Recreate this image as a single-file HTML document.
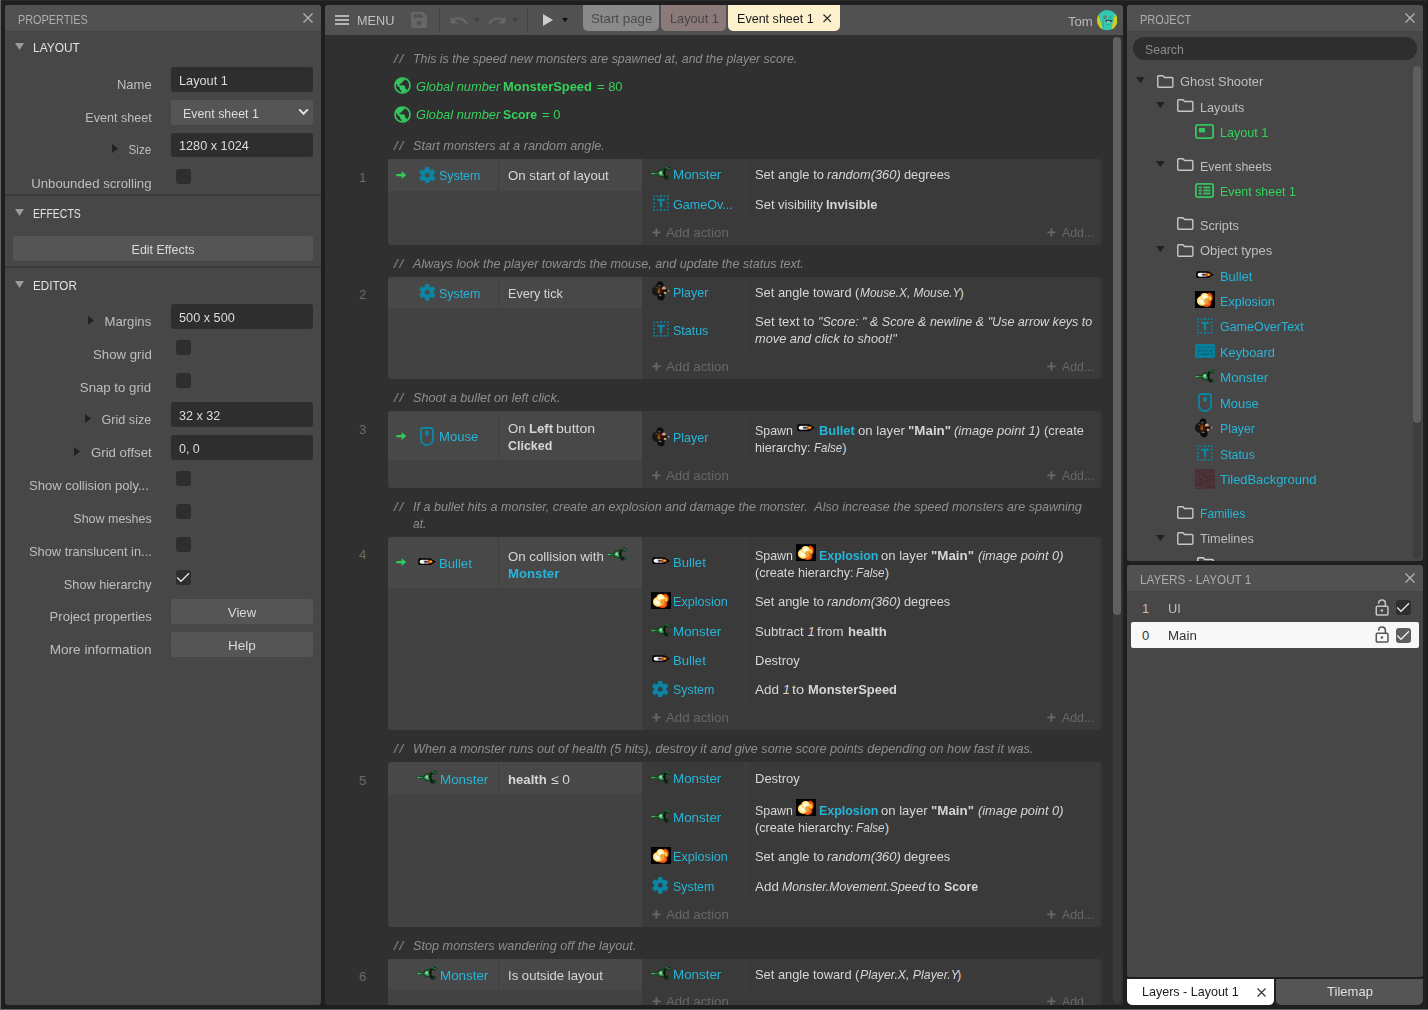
<!DOCTYPE html>
<html lang="en"><head><meta charset="utf-8"><title>Construct 3 - Ghost Shooter</title>
<style>
*{box-sizing:border-box;margin:0;padding:0}
html,body{width:1428px;height:1010px;overflow:hidden;background:#1f1f1f}
body{position:relative;font-family:"Liberation Sans",sans-serif;font-size:13px;color:#c8c8c8}
div,svg{position:absolute}
.t{line-height:17px;height:17px;white-space:nowrap}
.cap{color:#adadad}
.sec{color:#e2e2e2}
.lbl{color:#bebebe}
.val{color:#dcdcdc}
.btn{color:#d8d8d8}
.cm{color:#8e8e8e;font-style:italic}
.gv{color:#35d15b}
.gv i{font-style:italic}
.ob{color:#25b5d9}
.ac{color:#d6d6d6}
.ac b,.gv b{font-weight:bold}
.ac b.ob{color:#25b5d9}
.num{color:#6a6a6a}
.add{color:#676767}
.tr{color:#bebebe}
.gr{color:#35d15b}

</style></head>
<body>
<div style="left:0px;top:0px;width:1428px;height:1px;background:#2a2a2a;"></div>
<div style="left:0px;top:0px;width:1px;height:1010px;background:#626262;"></div>
<div style="left:1427px;top:0px;width:1px;height:1009px;background:#1a1a1a;"></div>
<div style="left:0px;top:1009px;width:1428px;height:1px;background:#666666;"></div>
<!-- Properties panel -->
<div style="left:5px;top:5px;width:316px;height:1000px;background:#474747;border-radius:3px;"></div>
<div style="left:5px;top:5px;width:316px;height:26px;background:#515151;border-radius:3px 3px 0 0;"></div>
<div style="left:5px;top:31px;width:316px;height:1px;background:#444444;"></div>
<div class="t cap" id="t1" style="top:11px;left:18px;transform:scaleX(0.8353);transform-origin:left center;">PROPERTIES</div>
<svg style="left:303px;top:13px;" width="10" height="10" viewBox="0 0 10 10"><path d="M0.5 0.5L9.5 9.5M9.5 0.5L0.5 9.5" stroke="#b4b4b4" stroke-width="1.25" fill="none"/></svg>
<svg style="left:15px;top:43px;" width="9" height="7" viewBox="0 0 9 7"><path d="M0 0H9L4.5 7Z" fill="#9c9c9c"/></svg>
<div class="t sec" id="t2" style="top:39px;left:33px;transform:scaleX(0.9165);transform-origin:left center;">LAYOUT</div>
<div class="t lbl" id="t3" style="top:76px;right:1276.5px;transform:scaleX(1.0032);transform-origin:right center;">Name</div>
<div style="left:171px;top:67px;width:142px;height:25px;background:#2e2e2e;border-radius:3px;"></div>
<div class="t val" id="t4" style="top:72px;left:179px;transform:scaleX(0.9784);transform-origin:left center;">Layout 1</div>
<div class="t lbl" id="t5" style="top:109px;right:1276.5px;transform:scaleX(0.9657);transform-origin:right center;">Event sheet</div>
<div style="left:171px;top:100px;width:142px;height:25px;background:#555555;border-radius:3px;"></div>
<div class="t val" id="t6" style="top:105px;left:183px;transform:scaleX(0.9535);transform-origin:left center;">Event sheet 1</div>
<svg style="left:298px;top:108px;" width="11" height="8" viewBox="0 0 11 8"><path d="M1.2 1.4L5.5 5.8L9.8 1.4" fill="none" stroke="#e0e0e0" stroke-width="2"/></svg>
<div class="t lbl" id="t7" style="top:141px;right:1276.5px;transform:scaleX(0.9013);transform-origin:right center;">Size</div>
<svg style="left:112px;top:144px;" width="6" height="9" viewBox="0 0 6 9"><path d="M0 0L6 4.5L0 9Z" fill="#222222"/></svg>
<div style="left:171px;top:133px;width:142px;height:24px;background:#2e2e2e;border-radius:3px;"></div>
<div class="t val" id="t8" style="top:137px;left:179px;transform:scaleX(0.9752);transform-origin:left center;">1280 x 1024</div>
<div class="t lbl" id="t9" style="top:175px;right:1276.5px;transform:scaleX(1.0149);transform-origin:right center;">Unbounded scrolling</div>
<div style="left:176px;top:169px;width:15px;height:15px;background:#2e2e2e;border-radius:3px;"></div>
<div style="left:5px;top:194px;width:316px;height:2px;background:#3b3b3b;"></div>
<svg style="left:15px;top:209px;" width="9" height="7" viewBox="0 0 9 7"><path d="M0 0H9L4.5 7Z" fill="#9c9c9c"/></svg>
<div class="t sec" id="t10" style="top:205px;left:33px;transform:scaleX(0.8070);transform-origin:left center;">EFFECTS</div>
<div style="left:13px;top:236px;width:300px;height:25px;background:#555555;border-radius:3px;"></div>
<div class="t btn" style="top:241px;left:-37.0px;width:400px;text-align:center;transform:scaleX(0.9585);transform-origin:center center;"><span id="t11">Edit Effects</span></div>
<div style="left:5px;top:266px;width:316px;height:2px;background:#3b3b3b;"></div>
<svg style="left:15px;top:281px;" width="9" height="7" viewBox="0 0 9 7"><path d="M0 0H9L4.5 7Z" fill="#9c9c9c"/></svg>
<div class="t sec" id="t12" style="top:277px;left:33px;transform:scaleX(0.8959);transform-origin:left center;">EDITOR</div>
<div class="t lbl" id="t13" style="top:313px;right:1276.5px;transform:scaleX(1.0119);transform-origin:right center;">Margins</div>
<svg style="left:88px;top:316px;" width="6" height="9" viewBox="0 0 6 9"><path d="M0 0L6 4.5L0 9Z" fill="#222222"/></svg>
<div style="left:171px;top:304px;width:142px;height:25px;background:#2e2e2e;border-radius:3px;"></div>
<div class="t val" id="t14" style="top:309px;left:179px;transform:scaleX(0.9771);transform-origin:left center;">500 x 500</div>
<div class="t lbl" id="t15" style="top:346px;right:1276.5px;transform:scaleX(1.0171);transform-origin:right center;">Show grid</div>
<div style="left:176px;top:340px;width:15px;height:15px;background:#2e2e2e;border-radius:3px;"></div>
<div class="t lbl" id="t16" style="top:379px;right:1276.5px;transform:scaleX(1.0170);transform-origin:right center;">Snap to grid</div>
<div style="left:176px;top:373px;width:15px;height:15px;background:#2e2e2e;border-radius:3px;"></div>
<div class="t lbl" id="t17" style="top:411px;right:1276.5px;transform:scaleX(0.9708);transform-origin:right center;">Grid size</div>
<svg style="left:85px;top:414px;" width="6" height="9" viewBox="0 0 6 9"><path d="M0 0L6 4.5L0 9Z" fill="#222222"/></svg>
<div style="left:171px;top:402px;width:142px;height:25px;background:#2e2e2e;border-radius:3px;"></div>
<div class="t val" id="t18" style="top:407px;left:179px;transform:scaleX(0.9682);transform-origin:left center;">32 x 32</div>
<div class="t lbl" id="t19" style="top:444px;right:1276.5px;transform:scaleX(1.0178);transform-origin:right center;">Grid offset</div>
<svg style="left:74px;top:447px;" width="6" height="9" viewBox="0 0 6 9"><path d="M0 0L6 4.5L0 9Z" fill="#222222"/></svg>
<div style="left:171px;top:435px;width:142px;height:25px;background:#2e2e2e;border-radius:3px;"></div>
<div class="t val" id="t20" style="top:440px;left:179px;transform:scaleX(0.9591);transform-origin:left center;">0, 0</div>
<div class="t lbl" id="t21" style="top:477px;left:29px;transform:scaleX(1.0007);transform-origin:left center;">Show collision poly...</div>
<div style="left:176px;top:471px;width:15px;height:15px;background:#2e2e2e;border-radius:3px;"></div>
<div class="t lbl" id="t22" style="top:510px;right:1276.5px;transform:scaleX(0.9589);transform-origin:right center;">Show meshes</div>
<div style="left:176px;top:504px;width:15px;height:15px;background:#2e2e2e;border-radius:3px;"></div>
<div class="t lbl" id="t23" style="top:543px;left:29px;transform:scaleX(0.9880);transform-origin:left center;">Show translucent in...</div>
<div style="left:176px;top:537px;width:15px;height:15px;background:#2e2e2e;border-radius:3px;"></div>
<div class="t lbl" id="t24" style="top:576px;right:1276.5px;transform:scaleX(0.9798);transform-origin:right center;">Show hierarchy</div>
<svg style="left:176px;top:570px;" width="15" height="15" viewBox="0 0 15 15"><rect width="15" height="15" rx="3" fill="#2e2e2e"/><path d="M1.2 7.5L5 11.3L13 3.2" fill="none" stroke="#e8e8e8" stroke-width="1.25"/></svg>
<div class="t lbl" id="t25" style="top:608px;right:1276.5px;transform:scaleX(1.0040);transform-origin:right center;">Project properties</div>
<div style="left:171px;top:599px;width:142px;height:25px;background:#555555;border-radius:3px;"></div>
<div class="t btn" style="top:604px;left:42.0px;width:400px;text-align:center;transform:scaleX(1.0124);transform-origin:center center;"><span id="t26">View</span></div>
<div class="t lbl" id="t27" style="top:641px;right:1276.5px;transform:scaleX(1.0436);transform-origin:right center;">More information</div>
<div style="left:171px;top:632px;width:142px;height:25px;background:#555555;border-radius:3px;"></div>
<div class="t btn" style="top:637px;left:42.0px;width:400px;text-align:center;transform:scaleX(1.0393);transform-origin:center center;"><span id="t28">Help</span></div>
<!-- Toolbar and tabs -->
<div style="left:325px;top:5px;width:798px;height:1000px;background:#303030;border-radius:3px;"></div>
<div style="left:325px;top:5px;width:798px;height:30px;background:#515151;border-radius:3px 3px 0 0;"></div>
<div style="left:335px;top:15px;width:14px;height:2px;background:#b4b4b4;"></div>
<div style="left:335px;top:19px;width:14px;height:2px;background:#b4b4b4;"></div>
<div style="left:335px;top:23px;width:14px;height:2px;background:#b4b4b4;"></div>
<div class="t" id="t29" style="top:12px;left:357px;transform:scaleX(0.9744);transform-origin:left center;color:#c0c0c0;">MENU</div>
<svg style="left:411px;top:12px;" width="16" height="16" viewBox="0 0 16 16"><path d="M2 0H12L16 4V14Q16 16 14 16H2Q0 16 0 14V2Q0 0 2 0Z" fill="#666666"/><rect x="2.6" y="2.4" width="9" height="3.4" fill="#515151"/><circle cx="8" cy="11" r="2.3" fill="#515151"/></svg>
<div style="left:438.6px;top:7px;width:1.4px;height:26px;background:#454545;"></div>
<svg style="left:450px;top:14px;" width="18" height="12" viewBox="0 0 18 12"><path d="M16.8 9.8Q13.4 4.4 8 4.4Q5 4.4 3 6.2" fill="none" stroke="#666666" stroke-width="2.2"/><path d="M0.6 2.2V9.4H7.8Z" fill="#666666"/></svg>
<svg style="left:474px;top:17.6px;" width="6" height="4.2" viewBox="0 0 6 4.2"><path d="M0 0H6L3.0 4.2Z" fill="#434343"/></svg>
<svg style="left:488px;top:14px;" width="18" height="12" viewBox="0 0 18 12"><path d="M1.2 9.8Q4.6 4.4 10 4.4Q13 4.4 15 6.2" fill="none" stroke="#666666" stroke-width="2.2"/><path d="M17.4 2.2V9.4H10.2Z" fill="#666666"/></svg>
<svg style="left:512.4px;top:17.6px;" width="6" height="4.2" viewBox="0 0 6 4.2"><path d="M0 0H6L3.0 4.2Z" fill="#434343"/></svg>
<div style="left:526.6px;top:7px;width:1.4px;height:26px;background:#454545;"></div>
<svg style="left:543px;top:14px;" width="10" height="12" viewBox="0 0 10 12"><path d="M0 0L10 6L0 12Z" fill="#cccccc"/></svg>
<svg style="left:562.2px;top:17.6px;" width="6" height="4.2" viewBox="0 0 6 4.2"><path d="M0 0H6L3.0 4.2Z" fill="#101010"/></svg>
<div style="left:583px;top:5px;width:76px;height:26px;background:#8a8a8a;border-radius:0 0 5px 5px;"></div>
<div class="t" id="t30" style="top:10px;left:591px;transform:scaleX(1.0217);transform-origin:left center;color:#4c4c4c;">Start page</div>
<div style="left:661px;top:5px;width:65px;height:26px;background:#8b7a7a;border-radius:0 0 5px 5px;"></div>
<div class="t" id="t31" style="top:10px;left:670px;transform:scaleX(0.9784);transform-origin:left center;color:#4b4444;">Layout 1</div>
<div style="left:728px;top:5px;width:112px;height:26px;background:#fdf0cd;border-radius:0 0 5px 5px;"></div>
<div class="t" id="t32" style="top:10px;left:736.5px;transform:scaleX(0.9660);transform-origin:left center;color:#1a1a1a;">Event sheet 1</div>
<svg style="left:822.8px;top:14px;" width="8.5" height="8.5" viewBox="0 0 8.5 8.5"><path d="M0.5 0.5L8.0 8.0M8.0 0.5L0.5 8.0" stroke="#2a2a2a" stroke-width="1.2" fill="none"/></svg>
<div class="t" id="t33" style="top:13px;left:1068px;transform:scaleX(1.0097);transform-origin:left center;color:#b8b8b8;">Tom</div>
<svg style="left:1096.8px;top:9.8px;" width="20.4" height="20.4" viewBox="0 0 20.4 20.4"><defs><clipPath id="avc"><circle cx="10.2" cy="10.2" r="10.2"/></clipPath></defs><g clip-path="url(#avc)"><rect width="20.4" height="20.4" fill="#33c9b1"/><path d="M-1 5.6L1.6 5.2L5.6 18.6L-1 21Z" fill="#d2ce14"/><path d="M18.2 4.2L21.4 4L21.4 21L14.8 18.8L15.4 14Z" fill="#d2ce14"/><path d="M7.8 10.4Q11.4 9 16 10.2Q14.6 12.6 11.8 12.6Q9 12.6 7.8 10.4Z" fill="#2c4a52"/><rect x="9.6" y="11.3" width="3.6" height="1.2" rx="0.5" fill="#d8e8e4"/><circle cx="8.2" cy="7.3" r="1.45" fill="#2bb8a4" stroke="#8a4a4a" stroke-width="0.7"/><circle cx="13.4" cy="7.2" r="1.1" fill="#279c8c"/><path d="M6.2 9.4V17.4" stroke="#2a8e84" stroke-width="0.6"/><path d="M9 14.6H13" stroke="#2a9a8a" stroke-width="0.6"/></g></svg>
<div style="left:1113px;top:37px;width:8px;height:966px;background:#3a3a3a;border-radius:4px;"></div>
<div style="left:1113px;top:37px;width:8px;height:578px;background:#606060;border-radius:4px;"></div>
<!-- Event sheet -->
<div class="t cm" id="t34" style="top:50px;left:394px;letter-spacing:1.8px;">//</div>
<div class="t cm" id="t35" style="top:50px;left:412.7px;transform:scaleX(0.9513);transform-origin:left center;">This is the speed new monsters are spawned at, and the player score.</div>
<svg style="left:393.5px;top:77px;" width="17" height="17" viewBox="0 0 17 17"><circle cx="8.5" cy="8.5" r="7.5" fill="none" stroke="#33c65e" stroke-width="1.7"/><path d="M1.6 5.2Q3.5 1.6 8.5 1.2L11 2.2L10.2 3.6L8.6 4.4L7.6 6.2L5.6 7L5.4 8.2L9 8.2L11 9L11.2 11.4L13 12.4L12.6 13.8Q10.8 15.8 7.6 15.8L7.2 13.4L6 12.4L5.6 10.4L4 9.4L2.6 7.4Z" fill="#33c65e"/></svg>
<div class="t gv" id="t36" style="top:78px;left:416.0px;transform:scaleX(0.9873);transform-origin:left center;"><i>Global number</i></div>
<div class="t gv" id="t37" style="top:78px;left:503.40000000000003px;transform:scaleX(0.9924);transform-origin:left center;"><b>MonsterSpeed</b></div>
<div class="t gv" id="t38" style="top:78px;left:596.6px;transform:scaleX(0.9933);transform-origin:left center;">= 80</div>
<svg style="left:393.5px;top:105.5px;" width="17" height="17" viewBox="0 0 17 17"><circle cx="8.5" cy="8.5" r="7.5" fill="none" stroke="#33c65e" stroke-width="1.7"/><path d="M1.6 5.2Q3.5 1.6 8.5 1.2L11 2.2L10.2 3.6L8.6 4.4L7.6 6.2L5.6 7L5.4 8.2L9 8.2L11 9L11.2 11.4L13 12.4L12.6 13.8Q10.8 15.8 7.6 15.8L7.2 13.4L6 12.4L5.6 10.4L4 9.4L2.6 7.4Z" fill="#33c65e"/></svg>
<div class="t gv" id="t39" style="top:106px;left:416.0px;transform:scaleX(0.9873);transform-origin:left center;"><i>Global number</i></div>
<div class="t gv" id="t40" style="top:106px;left:503.40000000000003px;transform:scaleX(0.9435);transform-origin:left center;"><b>Score</b></div>
<div class="t gv" id="t41" style="top:106px;left:541.8000000000001px;transform:scaleX(0.9980);transform-origin:left center;">= 0</div>
<div class="t cm" id="t42" style="top:137px;left:394px;letter-spacing:1.8px;">//</div>
<div class="t cm" id="t43" style="top:137px;left:412.7px;transform:scaleX(0.9758);transform-origin:left center;">Start monsters at a random angle.</div>
<div class="t num" id="t44" style="top:169px;left:359px;">1</div>
<div style="left:388px;top:159px;width:254px;height:85.5px;background:#424242;border-radius:3px 0 0 3px;"></div>
<div style="left:388px;top:159px;width:254px;height:32px;background:#484848;border-radius:3px 0 0 0;"></div>
<div style="left:498px;top:160px;width:1px;height:30px;background:#3f3f3f;"></div>
<div style="left:642px;top:159px;width:459px;height:85.5px;background:#3a3a3a;border-radius:0 3px 3px 0;"></div>
<svg style="left:395.5px;top:171px;" width="11" height="9" viewBox="0 0 11 9"><path d="M0.3 3.0H5.6V0.3L10.3 4.1L5.6 7.9V5.2H0.3Z" fill="#31c95d"/></svg>
<svg style="left:419px;top:166.6px;" width="16.5" height="16.5" viewBox="0 0 17 17"><path d="M6.45 2.86L6.61 0.32L10.39 0.32L10.55 2.86L12.36 3.90L14.64 2.77L16.53 6.04L14.41 7.46L14.41 9.54L16.53 10.96L14.64 14.23L12.36 13.10L10.55 14.14L10.39 16.68L6.61 16.68L6.45 14.14L4.64 13.10L2.36 14.23L0.47 10.96L2.59 9.54L2.59 7.46L0.47 6.04L2.36 2.77L4.64 3.90ZM5.7 8.5a2.8 2.8 0 1 0 5.6 0a2.8 2.8 0 1 0 -5.6 0Z" fill="#0b86a4" fill-rule="evenodd" stroke="#0b86a4" stroke-width="0.8" stroke-linejoin="round"/></svg>
<div class="t ob" id="t45" style="top:167px;left:439px;transform:scaleX(0.9528);transform-origin:left center;">System</div>
<div class="t ac" id="t46" style="top:167px;left:508px;transform:scaleX(1.0182);transform-origin:left center;">On start of layout</div>
<svg style="left:651.2px;top:165.8px;" width="20" height="14" viewBox="0 0 20 14"><defs><filter id="mf1" x="-15%" y="-15%" width="130%" height="130%"><feGaussianBlur stdDeviation="0.55"/></filter></defs><g filter="url(#mf1)"><ellipse cx="3.6" cy="7.5" rx="3.5" ry="1.4" fill="#153a20"/><path d="M6 7L8 4.6L10.4 3L13 3.4L14.2 5.6L14.4 8.6L13.6 10.8L10.6 11.4L8 10.4L6.4 8.8Z" fill="#12361d"/><path d="M13 3.2L14.4 1L16.4 0.4L18.6 1.2L19.8 1.6L19.4 3.2L18.4 4.6L17 4.4L15.6 3.6L14.8 5.4Z" fill="#0f2a17"/><path d="M13.4 9.4L14.8 10.4L16.6 9.6L18.6 10.2L19.4 11.8L18.6 13L16.6 13.2L15.2 13.8L14 13Z" fill="#0d2414"/><path d="M13.8 3.4Q12.8 7.2 14.6 12.6" stroke="#0a160d" stroke-width="1.4" fill="none"/><ellipse cx="3.4" cy="7.5" rx="2.9" ry="0.85" fill="#2f8c4a"/><ellipse cx="1.7" cy="7.4" rx="1.3" ry="0.75" fill="#58c079"/><path d="M6.4 7.4L8.4 5.4L10.6 4L12.2 4.8L12.4 7.6L12.6 9.8L10.4 10.4L8.2 9.6Z" fill="#2a8044"/><ellipse cx="9.7" cy="6.9" rx="1.45" ry="1.7" fill="#9fd6ab"/><ellipse cx="10.8" cy="8.6" rx="1.2" ry="1" fill="#3fa85c"/><circle cx="13" cy="6.7" r="0.9" fill="#040404"/><ellipse cx="15.5" cy="1.6" rx="1.2" ry="0.9" fill="#2c7a42"/><ellipse cx="17.8" cy="2.6" rx="1.1" ry="0.9" fill="#2f8a46"/><ellipse cx="18" cy="11.5" rx="1.2" ry="1" fill="#1f6030"/></g></svg>
<div class="t ob" id="t47" style="top:166px;left:673px;transform:scaleX(1.0283);transform-origin:left center;">Monster</div>
<div class="t ac" id="t48" style="top:166px;left:754.6px;transform:scaleX(0.9929);transform-origin:left center;">Set angle to</div>
<div class="t ac" id="t49" style="top:166px;left:826.8000000000001px;transform:scaleX(0.9901);transform-origin:left center;"><i>random(360)</i></div>
<div class="t ac" id="t50" style="top:166px;left:903.6px;transform:scaleX(0.9833);transform-origin:left center;">degrees</div>
<svg style="left:653px;top:195px;" width="16" height="16" viewBox="0 0 16 16"><rect x="0.15000000000000013" y="0.2" width="1.9" height="1.8" rx="0.8" fill="#0b86a4"/><rect x="0.15000000000000013" y="14" width="1.9" height="1.8" rx="0.8" fill="#0b86a4"/><rect x="3.45" y="0.2" width="1.9" height="1.8" rx="0.8" fill="#0b86a4"/><rect x="3.45" y="14" width="1.9" height="1.8" rx="0.8" fill="#0b86a4"/><rect x="6.6" y="0.2" width="2.8" height="1.8" rx="0.8" fill="#0b86a4"/><rect x="6.6" y="14" width="2.8" height="1.8" rx="0.8" fill="#0b86a4"/><rect x="10.65" y="0.2" width="1.9" height="1.8" rx="0.8" fill="#0b86a4"/><rect x="10.65" y="14" width="1.9" height="1.8" rx="0.8" fill="#0b86a4"/><rect x="13.950000000000001" y="0.2" width="1.9" height="1.8" rx="0.8" fill="#0b86a4"/><rect x="13.950000000000001" y="14" width="1.9" height="1.8" rx="0.8" fill="#0b86a4"/><rect x="0.2" y="3.45" width="1.8" height="1.9" rx="0.8" fill="#0b86a4"/><rect x="14" y="3.45" width="1.8" height="1.9" rx="0.8" fill="#0b86a4"/><rect x="0.2" y="7.05" width="1.8" height="1.9" rx="0.8" fill="#0b86a4"/><rect x="14" y="7.05" width="1.8" height="1.9" rx="0.8" fill="#0b86a4"/><rect x="0.2" y="10.65" width="1.8" height="1.9" rx="0.8" fill="#0b86a4"/><rect x="14" y="10.65" width="1.8" height="1.9" rx="0.8" fill="#0b86a4"/><path d="M4.2 3.8H11.8V6.1H9.2V12.2H6.8V6.1H4.2Z" fill="#0b86a4"/></svg>
<div class="t ob" id="t51" style="top:196px;left:673px;transform:scaleX(0.9662);transform-origin:left center;">GameOv...</div>
<div class="t ac" id="t52" style="top:196px;left:754.6px;transform:scaleX(0.9997);transform-origin:left center;">Set visibility</div>
<div class="t ac" id="t53" style="top:196px;left:826.0px;transform:scaleX(0.9879);transform-origin:left center;"><b>Invisible</b></div>
<div style="left:745px;top:160px;width:1px;height:57px;background:#424242;"></div>
<svg style="left:652px;top:227.5px;" width="9" height="9" viewBox="0 0 9 9"><path d="M4.4 0.3V8.5M0.3 4.4H8.5" stroke="#676767" stroke-width="1.9" fill="none"/></svg>
<div class="t add" id="t54" style="top:224px;left:666px;transform:scaleX(1.0222);transform-origin:left center;">Add action</div>
<svg style="left:1047px;top:227.5px;" width="9" height="9" viewBox="0 0 9 9"><path d="M4.4 0.3V8.5M0.3 4.4H8.5" stroke="#676767" stroke-width="1.9" fill="none"/></svg>
<div class="t add" id="t55" style="top:224px;left:1061.5px;transform:scaleX(0.9509);transform-origin:left center;">Add...</div>
<div class="t cm" id="t56" style="top:255px;left:394px;letter-spacing:1.8px;">//</div>
<div class="t cm" id="t57" style="top:255px;left:412.7px;transform:scaleX(0.9692);transform-origin:left center;">Always look the player towards the mouse, and update the status text.</div>
<div class="t num" id="t58" style="top:286px;left:359px;">2</div>
<div style="left:388px;top:277px;width:254px;height:101.5px;background:#424242;border-radius:3px 0 0 3px;"></div>
<div style="left:388px;top:277px;width:254px;height:31px;background:#484848;border-radius:3px 0 0 0;"></div>
<div style="left:498px;top:278px;width:1px;height:29px;background:#3f3f3f;"></div>
<div style="left:642px;top:277px;width:459px;height:101.5px;background:#3a3a3a;border-radius:0 3px 3px 0;"></div>
<svg style="left:419px;top:284.1px;" width="16.5" height="16.5" viewBox="0 0 17 17"><path d="M6.45 2.86L6.61 0.32L10.39 0.32L10.55 2.86L12.36 3.90L14.64 2.77L16.53 6.04L14.41 7.46L14.41 9.54L16.53 10.96L14.64 14.23L12.36 13.10L10.55 14.14L10.39 16.68L6.61 16.68L6.45 14.14L4.64 13.10L2.36 14.23L0.47 10.96L2.59 9.54L2.59 7.46L0.47 6.04L2.36 2.77L4.64 3.90ZM5.7 8.5a2.8 2.8 0 1 0 5.6 0a2.8 2.8 0 1 0 -5.6 0Z" fill="#0b86a4" fill-rule="evenodd" stroke="#0b86a4" stroke-width="0.8" stroke-linejoin="round"/></svg>
<div class="t ob" id="t59" style="top:285px;left:439px;transform:scaleX(0.9528);transform-origin:left center;">System</div>
<div class="t ac" id="t60" style="top:285px;left:508px;transform:scaleX(0.9726);transform-origin:left center;">Every tick</div>
<svg style="left:652px;top:281.0px;" width="20" height="20" viewBox="0 0 20 20"><defs><filter id="pf2" x="-10%" y="-10%" width="120%" height="120%"><feGaussianBlur stdDeviation="0.5"/></filter></defs><g filter="url(#pf2)"><ellipse cx="8" cy="4" rx="3.4" ry="3.6" fill="#0a0a0a"/><ellipse cx="9" cy="15.6" rx="3.6" ry="3.8" fill="#0a0a0a"/><ellipse cx="5" cy="9.6" rx="5" ry="5.4" fill="#181818"/><ellipse cx="9.6" cy="9.8" rx="4" ry="5" fill="#101010"/><ellipse cx="7.4" cy="4.6" rx="1.4" ry="0.9" fill="#585858"/><ellipse cx="8.2" cy="14.4" rx="1.5" ry="0.8" fill="#6c6c6c"/><ellipse cx="4.2" cy="6.6" rx="0.9" ry="0.6" fill="#5a5a5a"/><rect x="5.4" y="6.6" width="3.2" height="6" rx="1.3" fill="#7c3604"/><rect x="5.8" y="8.8" width="2.2" height="3.2" rx="1" fill="#96520a"/><rect x="8.4" y="7" width="1.8" height="5.4" rx="0.8" fill="#4a1204"/><ellipse cx="11.8" cy="7.2" rx="1.9" ry="1.6" fill="#d49c7c"/><ellipse cx="13" cy="11.8" rx="1.4" ry="1.3" fill="#d09c70"/><path d="M11 8.8L14.4 8.4L19.2 9.8L14.4 11L11.4 10.4Z" fill="#1a1412"/><circle cx="16.6" cy="9.7" r="1.05" fill="#a0a0a0"/></g></svg>
<div class="t ob" id="t61" style="top:284px;left:673px;transform:scaleX(0.9577);transform-origin:left center;">Player</div>
<div class="t ac" id="t62" style="top:284px;left:754.6px;transform:scaleX(0.9894);transform-origin:left center;">Set angle toward (</div>
<div class="t ac" id="t63" style="top:284px;left:859.5px;transform:scaleX(0.9151);transform-origin:left center;"><i>Mouse.X, Mouse.Y</i></div>
<div class="t ac" id="t64" style="top:284px;left:959.6px;">)</div>
<svg style="left:653px;top:320.5px;" width="16" height="16" viewBox="0 0 16 16"><rect x="0.15000000000000013" y="0.2" width="1.9" height="1.8" rx="0.8" fill="#0b86a4"/><rect x="0.15000000000000013" y="14" width="1.9" height="1.8" rx="0.8" fill="#0b86a4"/><rect x="3.45" y="0.2" width="1.9" height="1.8" rx="0.8" fill="#0b86a4"/><rect x="3.45" y="14" width="1.9" height="1.8" rx="0.8" fill="#0b86a4"/><rect x="6.6" y="0.2" width="2.8" height="1.8" rx="0.8" fill="#0b86a4"/><rect x="6.6" y="14" width="2.8" height="1.8" rx="0.8" fill="#0b86a4"/><rect x="10.65" y="0.2" width="1.9" height="1.8" rx="0.8" fill="#0b86a4"/><rect x="10.65" y="14" width="1.9" height="1.8" rx="0.8" fill="#0b86a4"/><rect x="13.950000000000001" y="0.2" width="1.9" height="1.8" rx="0.8" fill="#0b86a4"/><rect x="13.950000000000001" y="14" width="1.9" height="1.8" rx="0.8" fill="#0b86a4"/><rect x="0.2" y="3.45" width="1.8" height="1.9" rx="0.8" fill="#0b86a4"/><rect x="14" y="3.45" width="1.8" height="1.9" rx="0.8" fill="#0b86a4"/><rect x="0.2" y="7.05" width="1.8" height="1.9" rx="0.8" fill="#0b86a4"/><rect x="14" y="7.05" width="1.8" height="1.9" rx="0.8" fill="#0b86a4"/><rect x="0.2" y="10.65" width="1.8" height="1.9" rx="0.8" fill="#0b86a4"/><rect x="14" y="10.65" width="1.8" height="1.9" rx="0.8" fill="#0b86a4"/><path d="M4.2 3.8H11.8V6.1H9.2V12.2H6.8V6.1H4.2Z" fill="#0b86a4"/></svg>
<div class="t ob" id="t65" style="top:322px;left:673px;transform:scaleX(0.9577);transform-origin:left center;">Status</div>
<div class="t ac" id="t66" style="top:313px;left:754.6px;transform:scaleX(1.0112);transform-origin:left center;">Set text to</div>
<div class="t ac" id="t67" style="top:313px;left:818.1px;transform:scaleX(0.9631);transform-origin:left center;"><i>"Score: " &amp; Score &amp; newline &amp; "Use arrow keys to</i></div>
<div class="t ac" id="t68" style="top:330px;left:755px;transform:scaleX(0.9842);transform-origin:left center;"><i>move and click to shoot!"</i></div>
<div style="left:745px;top:278px;width:1px;height:74px;background:#424242;"></div>
<svg style="left:652px;top:361.5px;" width="9" height="9" viewBox="0 0 9 9"><path d="M4.4 0.3V8.5M0.3 4.4H8.5" stroke="#676767" stroke-width="1.9" fill="none"/></svg>
<div class="t add" id="t69" style="top:358px;left:666px;transform:scaleX(1.0222);transform-origin:left center;">Add action</div>
<svg style="left:1047px;top:361.5px;" width="9" height="9" viewBox="0 0 9 9"><path d="M4.4 0.3V8.5M0.3 4.4H8.5" stroke="#676767" stroke-width="1.9" fill="none"/></svg>
<div class="t add" id="t70" style="top:358px;left:1061.5px;transform:scaleX(0.9509);transform-origin:left center;">Add...</div>
<div class="t cm" id="t71" style="top:389px;left:394px;letter-spacing:1.8px;">//</div>
<div class="t cm" id="t72" style="top:389px;left:412.7px;transform:scaleX(0.9753);transform-origin:left center;">Shoot a bullet on left click.</div>
<div class="t num" id="t73" style="top:421px;left:359px;">3</div>
<div style="left:388px;top:411px;width:254px;height:76.5px;background:#424242;border-radius:3px 0 0 3px;"></div>
<div style="left:388px;top:411px;width:254px;height:49px;background:#484848;border-radius:3px 0 0 0;"></div>
<div style="left:498px;top:412px;width:1px;height:47px;background:#3f3f3f;"></div>
<div style="left:642px;top:411px;width:459px;height:76.5px;background:#3a3a3a;border-radius:0 3px 3px 0;"></div>
<svg style="left:395.5px;top:432.2px;" width="11" height="9" viewBox="0 0 11 9"><path d="M0.3 3.0H5.6V0.3L10.3 4.1L5.6 7.9V5.2H0.3Z" fill="#31c95d"/></svg>
<svg style="left:419.8px;top:426.5px;" width="14" height="19" viewBox="0 0 14 19"><path d="M1 3.2Q1 1 3.2 1H10.8Q13 1 13 3.2V11.6Q13 18 7 18Q1 18 1 11.6Z" fill="none" stroke="#0b86a4" stroke-width="1.8"/><ellipse cx="7" cy="6.3" rx="1.9" ry="2.7" fill="#0b86a4"/></svg>
<div class="t ob" id="t74" style="top:428px;left:439px;transform:scaleX(1.0069);transform-origin:left center;">Mouse</div>
<div class="t ac" id="t75" style="top:420px;left:507.90000000000003px;transform:scaleX(1.0090);transform-origin:left center;">On</div>
<div class="t ac" id="t76" style="top:420px;left:528.6px;transform:scaleX(1.0107);transform-origin:left center;"><b>Left</b></div>
<div class="t ac" id="t77" style="top:420px;left:555.6px;transform:scaleX(1.0842);transform-origin:left center;">button</div>
<div class="t ac" id="t78" style="top:437px;left:508px;transform:scaleX(0.9578);transform-origin:left center;"><b>Clicked</b></div>
<svg style="left:652px;top:426.5px;" width="20" height="20" viewBox="0 0 20 20"><defs><filter id="pf3" x="-10%" y="-10%" width="120%" height="120%"><feGaussianBlur stdDeviation="0.5"/></filter></defs><g filter="url(#pf3)"><ellipse cx="8" cy="4" rx="3.4" ry="3.6" fill="#0a0a0a"/><ellipse cx="9" cy="15.6" rx="3.6" ry="3.8" fill="#0a0a0a"/><ellipse cx="5" cy="9.6" rx="5" ry="5.4" fill="#181818"/><ellipse cx="9.6" cy="9.8" rx="4" ry="5" fill="#101010"/><ellipse cx="7.4" cy="4.6" rx="1.4" ry="0.9" fill="#585858"/><ellipse cx="8.2" cy="14.4" rx="1.5" ry="0.8" fill="#6c6c6c"/><ellipse cx="4.2" cy="6.6" rx="0.9" ry="0.6" fill="#5a5a5a"/><rect x="5.4" y="6.6" width="3.2" height="6" rx="1.3" fill="#7c3604"/><rect x="5.8" y="8.8" width="2.2" height="3.2" rx="1" fill="#96520a"/><rect x="8.4" y="7" width="1.8" height="5.4" rx="0.8" fill="#4a1204"/><ellipse cx="11.8" cy="7.2" rx="1.9" ry="1.6" fill="#d49c7c"/><ellipse cx="13" cy="11.8" rx="1.4" ry="1.3" fill="#d09c70"/><path d="M11 8.8L14.4 8.4L19.2 9.8L14.4 11L11.4 10.4Z" fill="#1a1412"/><circle cx="16.6" cy="9.7" r="1.05" fill="#a0a0a0"/></g></svg>
<div class="t ob" id="t79" style="top:429px;left:673px;transform:scaleX(0.9577);transform-origin:left center;">Player</div>
<div class="t ac" id="t80" style="top:422px;left:754.6px;transform:scaleX(0.9560);transform-origin:left center;">Spawn</div>
<div class="t ac" id="t81" style="top:422px;left:818.6px;transform:scaleX(0.9910);transform-origin:left center;"><b class="ob">Bullet</b></div>
<div class="t ac" id="t82" style="top:422px;left:857.5px;transform:scaleX(1.0141);transform-origin:left center;">on layer</div>
<div class="t ac" id="t83" style="top:422px;left:907.6px;transform:scaleX(1.0273);transform-origin:left center;"><b>"Main"</b></div>
<div class="t ac" id="t84" style="top:422px;left:954.4px;transform:scaleX(0.9917);transform-origin:left center;"><i>(image point 1)</i></div>
<div class="t ac" id="t85" style="top:422px;left:1043.6px;transform:scaleX(0.9835);transform-origin:left center;">(create</div>
<svg style="left:797px;top:424.2px" width="18" height="7.4" viewBox="0 0 18 8" preserveAspectRatio="none"><path d="M1.8 0.2H12.2L17.8 4L12.2 7.8H1.8Q0.2 7.8 0.2 6.2V1.8Q0.2 0.2 1.8 0.2Z" fill="#050505"/><ellipse cx="4.2" cy="4" rx="2.6" ry="2.2" fill="#ffffff"/><rect x="4.2" y="2" width="6.4" height="4" fill="#e8e8e8"/><rect x="6.2" y="3" width="3.6" height="2" fill="#303030"/><path d="M10.4 1.6L15.2 4L10.4 6.4Z" fill="#d8281a"/><ellipse cx="12.8" cy="4" rx="1.6" ry="1.2" fill="#ffb800"/></svg>
<div class="t ac" id="t86" style="top:439px;left:754.6px;transform:scaleX(0.9724);transform-origin:left center;">hierarchy:</div>
<div class="t ac" id="t87" style="top:439px;left:813.8000000000001px;transform:scaleX(0.8837);transform-origin:left center;"><i>False</i></div>
<div class="t ac" id="t88" style="top:439px;left:842.2px;">)</div>
<div style="left:745px;top:412px;width:1px;height:48px;background:#424242;"></div>
<svg style="left:652px;top:470.5px;" width="9" height="9" viewBox="0 0 9 9"><path d="M4.4 0.3V8.5M0.3 4.4H8.5" stroke="#676767" stroke-width="1.9" fill="none"/></svg>
<div class="t add" id="t89" style="top:467px;left:666px;transform:scaleX(1.0222);transform-origin:left center;">Add action</div>
<svg style="left:1047px;top:470.5px;" width="9" height="9" viewBox="0 0 9 9"><path d="M4.4 0.3V8.5M0.3 4.4H8.5" stroke="#676767" stroke-width="1.9" fill="none"/></svg>
<div class="t add" id="t90" style="top:467px;left:1061.5px;transform:scaleX(0.9509);transform-origin:left center;">Add...</div>
<div class="t cm" id="t91" style="top:498px;left:394px;letter-spacing:1.8px;">//</div>
<div class="t cm" id="t92" style="top:498px;left:412.7px;transform:scaleX(0.9664);transform-origin:left center;">If a bullet hits a monster, create an explosion and damage the monster.&nbsp; Also increase the speed monsters are spawning</div>
<div class="t cm" id="t93" style="top:515px;left:412.7px;transform:scaleX(0.9192);transform-origin:left center;">at.</div>
<div class="t num" id="t94" style="top:546px;left:359px;">4</div>
<div style="left:388px;top:537px;width:254px;height:192.5px;background:#424242;border-radius:3px 0 0 3px;"></div>
<div style="left:388px;top:537px;width:254px;height:51px;background:#484848;border-radius:3px 0 0 0;"></div>
<div style="left:498px;top:538px;width:1px;height:49px;background:#3f3f3f;"></div>
<div style="left:642px;top:537px;width:459px;height:192.5px;background:#3a3a3a;border-radius:0 3px 3px 0;"></div>
<svg style="left:395.5px;top:558.1px;" width="11" height="9" viewBox="0 0 11 9"><path d="M0.3 3.0H5.6V0.3L10.3 4.1L5.6 7.9V5.2H0.3Z" fill="#31c95d"/></svg>
<svg style="left:418px;top:557.5px" width="18" height="7.4" viewBox="0 0 18 8" preserveAspectRatio="none"><path d="M1.8 0.2H12.2L17.8 4L12.2 7.8H1.8Q0.2 7.8 0.2 6.2V1.8Q0.2 0.2 1.8 0.2Z" fill="#050505"/><ellipse cx="4.2" cy="4" rx="2.6" ry="2.2" fill="#ffffff"/><rect x="4.2" y="2" width="6.4" height="4" fill="#e8e8e8"/><rect x="6.2" y="3" width="3.6" height="2" fill="#303030"/><path d="M10.4 1.6L15.2 4L10.4 6.4Z" fill="#d8281a"/><ellipse cx="12.8" cy="4" rx="1.6" ry="1.2" fill="#ffb800"/></svg>
<div class="t ob" id="t95" style="top:555px;left:439px;transform:scaleX(1.0083);transform-origin:left center;">Bullet</div>
<div class="t ac" id="t96" style="top:548px;left:508px;transform:scaleX(1.0198);transform-origin:left center;">On collision with</div>
<svg style="left:607.4px;top:546.8px;" width="20" height="14" viewBox="0 0 20 14"><defs><filter id="mf4" x="-15%" y="-15%" width="130%" height="130%"><feGaussianBlur stdDeviation="0.55"/></filter></defs><g filter="url(#mf4)"><ellipse cx="3.6" cy="7.5" rx="3.5" ry="1.4" fill="#153a20"/><path d="M6 7L8 4.6L10.4 3L13 3.4L14.2 5.6L14.4 8.6L13.6 10.8L10.6 11.4L8 10.4L6.4 8.8Z" fill="#12361d"/><path d="M13 3.2L14.4 1L16.4 0.4L18.6 1.2L19.8 1.6L19.4 3.2L18.4 4.6L17 4.4L15.6 3.6L14.8 5.4Z" fill="#0f2a17"/><path d="M13.4 9.4L14.8 10.4L16.6 9.6L18.6 10.2L19.4 11.8L18.6 13L16.6 13.2L15.2 13.8L14 13Z" fill="#0d2414"/><path d="M13.8 3.4Q12.8 7.2 14.6 12.6" stroke="#0a160d" stroke-width="1.4" fill="none"/><ellipse cx="3.4" cy="7.5" rx="2.9" ry="0.85" fill="#2f8c4a"/><ellipse cx="1.7" cy="7.4" rx="1.3" ry="0.75" fill="#58c079"/><path d="M6.4 7.4L8.4 5.4L10.6 4L12.2 4.8L12.4 7.6L12.6 9.8L10.4 10.4L8.2 9.6Z" fill="#2a8044"/><ellipse cx="9.7" cy="6.9" rx="1.45" ry="1.7" fill="#9fd6ab"/><ellipse cx="10.8" cy="8.6" rx="1.2" ry="1" fill="#3fa85c"/><circle cx="13" cy="6.7" r="0.9" fill="#040404"/><ellipse cx="15.5" cy="1.6" rx="1.2" ry="0.9" fill="#2c7a42"/><ellipse cx="17.8" cy="2.6" rx="1.1" ry="0.9" fill="#2f8a46"/><ellipse cx="18" cy="11.5" rx="1.2" ry="1" fill="#1f6030"/></g></svg>
<div class="t ac" id="t97" style="top:565px;left:508px;transform:scaleX(1.0146);transform-origin:left center;"><b class="ob">Monster</b></div>
<svg style="left:652px;top:557px" width="18" height="7.4" viewBox="0 0 18 8" preserveAspectRatio="none"><path d="M1.8 0.2H12.2L17.8 4L12.2 7.8H1.8Q0.2 7.8 0.2 6.2V1.8Q0.2 0.2 1.8 0.2Z" fill="#050505"/><ellipse cx="4.2" cy="4" rx="2.6" ry="2.2" fill="#ffffff"/><rect x="4.2" y="2" width="6.4" height="4" fill="#e8e8e8"/><rect x="6.2" y="3" width="3.6" height="2" fill="#303030"/><path d="M10.4 1.6L15.2 4L10.4 6.4Z" fill="#d8281a"/><ellipse cx="12.8" cy="4" rx="1.6" ry="1.2" fill="#ffb800"/></svg>
<div class="t ob" id="t98" style="top:554px;left:673px;transform:scaleX(1.0083);transform-origin:left center;">Bullet</div>
<div class="t ac" id="t99" style="top:547px;left:754.6px;transform:scaleX(0.9560);transform-origin:left center;">Spawn</div>
<div class="t ac" id="t100" style="top:547px;left:818.6px;transform:scaleX(0.9561);transform-origin:left center;"><b class="ob">Explosion</b></div>
<div class="t ac" id="t101" style="top:547px;left:881.2px;transform:scaleX(1.0054);transform-origin:left center;">on layer</div>
<div class="t ac" id="t102" style="top:547px;left:931.2px;transform:scaleX(1.0250);transform-origin:left center;"><b>"Main"</b></div>
<div class="t ac" id="t103" style="top:547px;left:977.9px;transform:scaleX(0.9859);transform-origin:left center;"><i>(image point 0)</i></div>
<svg style="left:796px;top:544px;" width="20" height="17" viewBox="0 0 20 17"><defs><radialGradient id="eg5a" cx="50%" cy="50%" r="50%"><stop offset="0" stop-color="#ff8a1c"/><stop offset="0.72" stop-color="#f24e08"/><stop offset="1" stop-color="#c03000" stop-opacity="0"/></radialGradient><radialGradient id="eg5b" cx="50%" cy="50%" r="50%"><stop offset="0" stop-color="#ffffff"/><stop offset="0.6" stop-color="#fff2b0"/><stop offset="0.85" stop-color="#ffc850"/><stop offset="1" stop-color="#ffa020" stop-opacity="0"/></radialGradient><filter id="eg5f"><feGaussianBlur stdDeviation="0.35"/></filter></defs><rect width="20" height="17" fill="#020202"/><g filter="url(#eg5f)"><ellipse cx="14.2" cy="6.6" rx="4.2" ry="5.6" fill="url(#eg5a)"/><ellipse cx="11.6" cy="12.4" rx="5.4" ry="4.2" fill="url(#eg5a)"/><ellipse cx="7" cy="9.8" rx="5.6" ry="5.4" fill="url(#eg5b)"/><ellipse cx="9.6" cy="5.8" rx="4.6" ry="4.2" fill="url(#eg5b)"/><ellipse cx="11.4" cy="10" rx="2.3" ry="3" fill="#e8a040" opacity="0.9"/><ellipse cx="15" cy="7.4" rx="1.3" ry="2.2" fill="#f4e048" opacity="0.85"/></g></svg>
<div class="t ac" id="t104" style="top:564px;left:754.6px;transform:scaleX(0.9747);transform-origin:left center;">(create hierarchy:</div>
<div class="t ac" id="t105" style="top:564px;left:856.2px;transform:scaleX(0.8995);transform-origin:left center;"><i>False</i></div>
<div class="t ac" id="t106" style="top:564px;left:884.8000000000001px;">)</div>
<svg style="left:651px;top:592px;" width="20" height="17" viewBox="0 0 20 17"><defs><radialGradient id="eg6a" cx="50%" cy="50%" r="50%"><stop offset="0" stop-color="#ff8a1c"/><stop offset="0.72" stop-color="#f24e08"/><stop offset="1" stop-color="#c03000" stop-opacity="0"/></radialGradient><radialGradient id="eg6b" cx="50%" cy="50%" r="50%"><stop offset="0" stop-color="#ffffff"/><stop offset="0.6" stop-color="#fff2b0"/><stop offset="0.85" stop-color="#ffc850"/><stop offset="1" stop-color="#ffa020" stop-opacity="0"/></radialGradient><filter id="eg6f"><feGaussianBlur stdDeviation="0.35"/></filter></defs><rect width="20" height="17" fill="#020202"/><g filter="url(#eg6f)"><ellipse cx="14.2" cy="6.6" rx="4.2" ry="5.6" fill="url(#eg6a)"/><ellipse cx="11.6" cy="12.4" rx="5.4" ry="4.2" fill="url(#eg6a)"/><ellipse cx="7" cy="9.8" rx="5.6" ry="5.4" fill="url(#eg6b)"/><ellipse cx="9.6" cy="5.8" rx="4.6" ry="4.2" fill="url(#eg6b)"/><ellipse cx="11.4" cy="10" rx="2.3" ry="3" fill="#e8a040" opacity="0.9"/><ellipse cx="15" cy="7.4" rx="1.3" ry="2.2" fill="#f4e048" opacity="0.85"/></g></svg>
<div class="t ob" id="t107" style="top:593px;left:673px;transform:scaleX(0.9721);transform-origin:left center;">Explosion</div>
<div class="t ac" id="t108" style="top:593px;left:754.6px;transform:scaleX(0.9929);transform-origin:left center;">Set angle to</div>
<div class="t ac" id="t109" style="top:593px;left:826.8000000000001px;transform:scaleX(0.9901);transform-origin:left center;"><i>random(360)</i></div>
<div class="t ac" id="t110" style="top:593px;left:903.6px;transform:scaleX(0.9833);transform-origin:left center;">degrees</div>
<svg style="left:651.2px;top:622.8px;" width="20" height="14" viewBox="0 0 20 14"><defs><filter id="mf7" x="-15%" y="-15%" width="130%" height="130%"><feGaussianBlur stdDeviation="0.55"/></filter></defs><g filter="url(#mf7)"><ellipse cx="3.6" cy="7.5" rx="3.5" ry="1.4" fill="#153a20"/><path d="M6 7L8 4.6L10.4 3L13 3.4L14.2 5.6L14.4 8.6L13.6 10.8L10.6 11.4L8 10.4L6.4 8.8Z" fill="#12361d"/><path d="M13 3.2L14.4 1L16.4 0.4L18.6 1.2L19.8 1.6L19.4 3.2L18.4 4.6L17 4.4L15.6 3.6L14.8 5.4Z" fill="#0f2a17"/><path d="M13.4 9.4L14.8 10.4L16.6 9.6L18.6 10.2L19.4 11.8L18.6 13L16.6 13.2L15.2 13.8L14 13Z" fill="#0d2414"/><path d="M13.8 3.4Q12.8 7.2 14.6 12.6" stroke="#0a160d" stroke-width="1.4" fill="none"/><ellipse cx="3.4" cy="7.5" rx="2.9" ry="0.85" fill="#2f8c4a"/><ellipse cx="1.7" cy="7.4" rx="1.3" ry="0.75" fill="#58c079"/><path d="M6.4 7.4L8.4 5.4L10.6 4L12.2 4.8L12.4 7.6L12.6 9.8L10.4 10.4L8.2 9.6Z" fill="#2a8044"/><ellipse cx="9.7" cy="6.9" rx="1.45" ry="1.7" fill="#9fd6ab"/><ellipse cx="10.8" cy="8.6" rx="1.2" ry="1" fill="#3fa85c"/><circle cx="13" cy="6.7" r="0.9" fill="#040404"/><ellipse cx="15.5" cy="1.6" rx="1.2" ry="0.9" fill="#2c7a42"/><ellipse cx="17.8" cy="2.6" rx="1.1" ry="0.9" fill="#2f8a46"/><ellipse cx="18" cy="11.5" rx="1.2" ry="1" fill="#1f6030"/></g></svg>
<div class="t ob" id="t111" style="top:623px;left:673px;transform:scaleX(1.0283);transform-origin:left center;">Monster</div>
<div class="t ac" id="t112" style="top:623px;left:754.6px;transform:scaleX(1.0037);transform-origin:left center;">Subtract</div>
<div class="t ac" id="t113" style="top:623px;left:807.5px;"><i>1</i></div>
<div class="t ac" id="t114" style="top:623px;left:817.1px;transform:scaleX(1.0192);transform-origin:left center;">from</div>
<div class="t ac" id="t115" style="top:623px;left:847.9px;transform:scaleX(1.0105);transform-origin:left center;"><b>health</b></div>
<svg style="left:652px;top:655px" width="18" height="7.4" viewBox="0 0 18 8" preserveAspectRatio="none"><path d="M1.8 0.2H12.2L17.8 4L12.2 7.8H1.8Q0.2 7.8 0.2 6.2V1.8Q0.2 0.2 1.8 0.2Z" fill="#050505"/><ellipse cx="4.2" cy="4" rx="2.6" ry="2.2" fill="#ffffff"/><rect x="4.2" y="2" width="6.4" height="4" fill="#e8e8e8"/><rect x="6.2" y="3" width="3.6" height="2" fill="#303030"/><path d="M10.4 1.6L15.2 4L10.4 6.4Z" fill="#d8281a"/><ellipse cx="12.8" cy="4" rx="1.6" ry="1.2" fill="#ffb800"/></svg>
<div class="t ob" id="t116" style="top:652px;left:673px;transform:scaleX(1.0083);transform-origin:left center;">Bullet</div>
<div class="t ac" id="t117" style="top:652px;left:755px;transform:scaleX(1.0001);transform-origin:left center;">Destroy</div>
<svg style="left:652px;top:680.6px;" width="16.5" height="16.5" viewBox="0 0 17 17"><path d="M6.45 2.86L6.61 0.32L10.39 0.32L10.55 2.86L12.36 3.90L14.64 2.77L16.53 6.04L14.41 7.46L14.41 9.54L16.53 10.96L14.64 14.23L12.36 13.10L10.55 14.14L10.39 16.68L6.61 16.68L6.45 14.14L4.64 13.10L2.36 14.23L0.47 10.96L2.59 9.54L2.59 7.46L0.47 6.04L2.36 2.77L4.64 3.90ZM5.7 8.5a2.8 2.8 0 1 0 5.6 0a2.8 2.8 0 1 0 -5.6 0Z" fill="#0b86a4" fill-rule="evenodd" stroke="#0b86a4" stroke-width="0.8" stroke-linejoin="round"/></svg>
<div class="t ob" id="t118" style="top:681px;left:673px;transform:scaleX(0.9528);transform-origin:left center;">System</div>
<div class="t ac" id="t119" style="top:681px;left:754.6px;transform:scaleX(1.0328);transform-origin:left center;">Add</div>
<div class="t ac" id="t120" style="top:681px;left:782.7px;"><i>1</i></div>
<div class="t ac" id="t121" style="top:681px;left:792.3000000000001px;transform:scaleX(1.1251);transform-origin:left center;">to</div>
<div class="t ac" id="t122" style="top:681px;left:808.2px;transform:scaleX(0.9935);transform-origin:left center;"><b>MonsterSpeed</b></div>
<div style="left:745px;top:538px;width:1px;height:165px;background:#424242;"></div>
<svg style="left:652px;top:712.5px;" width="9" height="9" viewBox="0 0 9 9"><path d="M4.4 0.3V8.5M0.3 4.4H8.5" stroke="#676767" stroke-width="1.9" fill="none"/></svg>
<div class="t add" id="t123" style="top:709px;left:666px;transform:scaleX(1.0222);transform-origin:left center;">Add action</div>
<svg style="left:1047px;top:712.5px;" width="9" height="9" viewBox="0 0 9 9"><path d="M4.4 0.3V8.5M0.3 4.4H8.5" stroke="#676767" stroke-width="1.9" fill="none"/></svg>
<div class="t add" id="t124" style="top:709px;left:1061.5px;transform:scaleX(0.9509);transform-origin:left center;">Add...</div>
<div class="t cm" id="t125" style="top:740px;left:394px;letter-spacing:1.8px;">//</div>
<div class="t cm" id="t126" style="top:740px;left:412.7px;transform:scaleX(0.9700);transform-origin:left center;">When a monster runs out of health (5 hits), destroy it and give some score points depending on how fast it was.</div>
<div class="t num" id="t127" style="top:772px;left:359px;">5</div>
<div style="left:388px;top:762px;width:254px;height:164.5px;background:#424242;border-radius:3px 0 0 3px;"></div>
<div style="left:388px;top:762px;width:254px;height:32px;background:#484848;border-radius:3px 0 0 0;"></div>
<div style="left:498px;top:763px;width:1px;height:30px;background:#3f3f3f;"></div>
<div style="left:642px;top:762px;width:459px;height:164.5px;background:#3a3a3a;border-radius:0 3px 3px 0;"></div>
<svg style="left:417.2px;top:769.8px;" width="20" height="14" viewBox="0 0 20 14"><defs><filter id="mf8" x="-15%" y="-15%" width="130%" height="130%"><feGaussianBlur stdDeviation="0.55"/></filter></defs><g filter="url(#mf8)"><ellipse cx="3.6" cy="7.5" rx="3.5" ry="1.4" fill="#153a20"/><path d="M6 7L8 4.6L10.4 3L13 3.4L14.2 5.6L14.4 8.6L13.6 10.8L10.6 11.4L8 10.4L6.4 8.8Z" fill="#12361d"/><path d="M13 3.2L14.4 1L16.4 0.4L18.6 1.2L19.8 1.6L19.4 3.2L18.4 4.6L17 4.4L15.6 3.6L14.8 5.4Z" fill="#0f2a17"/><path d="M13.4 9.4L14.8 10.4L16.6 9.6L18.6 10.2L19.4 11.8L18.6 13L16.6 13.2L15.2 13.8L14 13Z" fill="#0d2414"/><path d="M13.8 3.4Q12.8 7.2 14.6 12.6" stroke="#0a160d" stroke-width="1.4" fill="none"/><ellipse cx="3.4" cy="7.5" rx="2.9" ry="0.85" fill="#2f8c4a"/><ellipse cx="1.7" cy="7.4" rx="1.3" ry="0.75" fill="#58c079"/><path d="M6.4 7.4L8.4 5.4L10.6 4L12.2 4.8L12.4 7.6L12.6 9.8L10.4 10.4L8.2 9.6Z" fill="#2a8044"/><ellipse cx="9.7" cy="6.9" rx="1.45" ry="1.7" fill="#9fd6ab"/><ellipse cx="10.8" cy="8.6" rx="1.2" ry="1" fill="#3fa85c"/><circle cx="13" cy="6.7" r="0.9" fill="#040404"/><ellipse cx="15.5" cy="1.6" rx="1.2" ry="0.9" fill="#2c7a42"/><ellipse cx="17.8" cy="2.6" rx="1.1" ry="0.9" fill="#2f8a46"/><ellipse cx="18" cy="11.5" rx="1.2" ry="1" fill="#1f6030"/></g></svg>
<div class="t ob" id="t128" style="top:771px;left:440px;transform:scaleX(1.0283);transform-origin:left center;">Monster</div>
<div class="t ac" id="t129" style="top:771px;left:507.70000000000005px;transform:scaleX(1.0131);transform-origin:left center;"><b>health</b></div>
<div class="t ac" id="t130" style="top:771px;left:551.0px;transform:scaleX(1.0565);transform-origin:left center;">≤ 0</div>
<svg style="left:651.2px;top:769.8px;" width="20" height="14" viewBox="0 0 20 14"><defs><filter id="mf9" x="-15%" y="-15%" width="130%" height="130%"><feGaussianBlur stdDeviation="0.55"/></filter></defs><g filter="url(#mf9)"><ellipse cx="3.6" cy="7.5" rx="3.5" ry="1.4" fill="#153a20"/><path d="M6 7L8 4.6L10.4 3L13 3.4L14.2 5.6L14.4 8.6L13.6 10.8L10.6 11.4L8 10.4L6.4 8.8Z" fill="#12361d"/><path d="M13 3.2L14.4 1L16.4 0.4L18.6 1.2L19.8 1.6L19.4 3.2L18.4 4.6L17 4.4L15.6 3.6L14.8 5.4Z" fill="#0f2a17"/><path d="M13.4 9.4L14.8 10.4L16.6 9.6L18.6 10.2L19.4 11.8L18.6 13L16.6 13.2L15.2 13.8L14 13Z" fill="#0d2414"/><path d="M13.8 3.4Q12.8 7.2 14.6 12.6" stroke="#0a160d" stroke-width="1.4" fill="none"/><ellipse cx="3.4" cy="7.5" rx="2.9" ry="0.85" fill="#2f8c4a"/><ellipse cx="1.7" cy="7.4" rx="1.3" ry="0.75" fill="#58c079"/><path d="M6.4 7.4L8.4 5.4L10.6 4L12.2 4.8L12.4 7.6L12.6 9.8L10.4 10.4L8.2 9.6Z" fill="#2a8044"/><ellipse cx="9.7" cy="6.9" rx="1.45" ry="1.7" fill="#9fd6ab"/><ellipse cx="10.8" cy="8.6" rx="1.2" ry="1" fill="#3fa85c"/><circle cx="13" cy="6.7" r="0.9" fill="#040404"/><ellipse cx="15.5" cy="1.6" rx="1.2" ry="0.9" fill="#2c7a42"/><ellipse cx="17.8" cy="2.6" rx="1.1" ry="0.9" fill="#2f8a46"/><ellipse cx="18" cy="11.5" rx="1.2" ry="1" fill="#1f6030"/></g></svg>
<div class="t ob" id="t131" style="top:770px;left:673px;transform:scaleX(1.0283);transform-origin:left center;">Monster</div>
<div class="t ac" id="t132" style="top:770px;left:755px;transform:scaleX(1.0001);transform-origin:left center;">Destroy</div>
<svg style="left:651.2px;top:808.8px;" width="20" height="14" viewBox="0 0 20 14"><defs><filter id="mf10" x="-15%" y="-15%" width="130%" height="130%"><feGaussianBlur stdDeviation="0.55"/></filter></defs><g filter="url(#mf10)"><ellipse cx="3.6" cy="7.5" rx="3.5" ry="1.4" fill="#153a20"/><path d="M6 7L8 4.6L10.4 3L13 3.4L14.2 5.6L14.4 8.6L13.6 10.8L10.6 11.4L8 10.4L6.4 8.8Z" fill="#12361d"/><path d="M13 3.2L14.4 1L16.4 0.4L18.6 1.2L19.8 1.6L19.4 3.2L18.4 4.6L17 4.4L15.6 3.6L14.8 5.4Z" fill="#0f2a17"/><path d="M13.4 9.4L14.8 10.4L16.6 9.6L18.6 10.2L19.4 11.8L18.6 13L16.6 13.2L15.2 13.8L14 13Z" fill="#0d2414"/><path d="M13.8 3.4Q12.8 7.2 14.6 12.6" stroke="#0a160d" stroke-width="1.4" fill="none"/><ellipse cx="3.4" cy="7.5" rx="2.9" ry="0.85" fill="#2f8c4a"/><ellipse cx="1.7" cy="7.4" rx="1.3" ry="0.75" fill="#58c079"/><path d="M6.4 7.4L8.4 5.4L10.6 4L12.2 4.8L12.4 7.6L12.6 9.8L10.4 10.4L8.2 9.6Z" fill="#2a8044"/><ellipse cx="9.7" cy="6.9" rx="1.45" ry="1.7" fill="#9fd6ab"/><ellipse cx="10.8" cy="8.6" rx="1.2" ry="1" fill="#3fa85c"/><circle cx="13" cy="6.7" r="0.9" fill="#040404"/><ellipse cx="15.5" cy="1.6" rx="1.2" ry="0.9" fill="#2c7a42"/><ellipse cx="17.8" cy="2.6" rx="1.1" ry="0.9" fill="#2f8a46"/><ellipse cx="18" cy="11.5" rx="1.2" ry="1" fill="#1f6030"/></g></svg>
<div class="t ob" id="t133" style="top:809px;left:673px;transform:scaleX(1.0283);transform-origin:left center;">Monster</div>
<div class="t ac" id="t134" style="top:802px;left:754.6px;transform:scaleX(0.9560);transform-origin:left center;">Spawn</div>
<div class="t ac" id="t135" style="top:802px;left:818.6px;transform:scaleX(0.9561);transform-origin:left center;"><b class="ob">Explosion</b></div>
<div class="t ac" id="t136" style="top:802px;left:881.2px;transform:scaleX(1.0054);transform-origin:left center;">on layer</div>
<div class="t ac" id="t137" style="top:802px;left:931.2px;transform:scaleX(1.0250);transform-origin:left center;"><b>"Main"</b></div>
<div class="t ac" id="t138" style="top:802px;left:977.9px;transform:scaleX(0.9859);transform-origin:left center;"><i>(image point 0)</i></div>
<svg style="left:796px;top:799px;" width="20" height="17" viewBox="0 0 20 17"><defs><radialGradient id="eg11a" cx="50%" cy="50%" r="50%"><stop offset="0" stop-color="#ff8a1c"/><stop offset="0.72" stop-color="#f24e08"/><stop offset="1" stop-color="#c03000" stop-opacity="0"/></radialGradient><radialGradient id="eg11b" cx="50%" cy="50%" r="50%"><stop offset="0" stop-color="#ffffff"/><stop offset="0.6" stop-color="#fff2b0"/><stop offset="0.85" stop-color="#ffc850"/><stop offset="1" stop-color="#ffa020" stop-opacity="0"/></radialGradient><filter id="eg11f"><feGaussianBlur stdDeviation="0.35"/></filter></defs><rect width="20" height="17" fill="#020202"/><g filter="url(#eg11f)"><ellipse cx="14.2" cy="6.6" rx="4.2" ry="5.6" fill="url(#eg11a)"/><ellipse cx="11.6" cy="12.4" rx="5.4" ry="4.2" fill="url(#eg11a)"/><ellipse cx="7" cy="9.8" rx="5.6" ry="5.4" fill="url(#eg11b)"/><ellipse cx="9.6" cy="5.8" rx="4.6" ry="4.2" fill="url(#eg11b)"/><ellipse cx="11.4" cy="10" rx="2.3" ry="3" fill="#e8a040" opacity="0.9"/><ellipse cx="15" cy="7.4" rx="1.3" ry="2.2" fill="#f4e048" opacity="0.85"/></g></svg>
<div class="t ac" id="t139" style="top:819px;left:754.6px;transform:scaleX(0.9747);transform-origin:left center;">(create hierarchy:</div>
<div class="t ac" id="t140" style="top:819px;left:856.2px;transform:scaleX(0.8995);transform-origin:left center;"><i>False</i></div>
<div class="t ac" id="t141" style="top:819px;left:884.8000000000001px;">)</div>
<svg style="left:651px;top:847px;" width="20" height="17" viewBox="0 0 20 17"><defs><radialGradient id="eg12a" cx="50%" cy="50%" r="50%"><stop offset="0" stop-color="#ff8a1c"/><stop offset="0.72" stop-color="#f24e08"/><stop offset="1" stop-color="#c03000" stop-opacity="0"/></radialGradient><radialGradient id="eg12b" cx="50%" cy="50%" r="50%"><stop offset="0" stop-color="#ffffff"/><stop offset="0.6" stop-color="#fff2b0"/><stop offset="0.85" stop-color="#ffc850"/><stop offset="1" stop-color="#ffa020" stop-opacity="0"/></radialGradient><filter id="eg12f"><feGaussianBlur stdDeviation="0.35"/></filter></defs><rect width="20" height="17" fill="#020202"/><g filter="url(#eg12f)"><ellipse cx="14.2" cy="6.6" rx="4.2" ry="5.6" fill="url(#eg12a)"/><ellipse cx="11.6" cy="12.4" rx="5.4" ry="4.2" fill="url(#eg12a)"/><ellipse cx="7" cy="9.8" rx="5.6" ry="5.4" fill="url(#eg12b)"/><ellipse cx="9.6" cy="5.8" rx="4.6" ry="4.2" fill="url(#eg12b)"/><ellipse cx="11.4" cy="10" rx="2.3" ry="3" fill="#e8a040" opacity="0.9"/><ellipse cx="15" cy="7.4" rx="1.3" ry="2.2" fill="#f4e048" opacity="0.85"/></g></svg>
<div class="t ob" id="t142" style="top:848px;left:673px;transform:scaleX(0.9721);transform-origin:left center;">Explosion</div>
<div class="t ac" id="t143" style="top:848px;left:754.6px;transform:scaleX(0.9929);transform-origin:left center;">Set angle to</div>
<div class="t ac" id="t144" style="top:848px;left:826.8000000000001px;transform:scaleX(0.9901);transform-origin:left center;"><i>random(360)</i></div>
<div class="t ac" id="t145" style="top:848px;left:903.6px;transform:scaleX(0.9833);transform-origin:left center;">degrees</div>
<svg style="left:652px;top:877.1px;" width="16.5" height="16.5" viewBox="0 0 17 17"><path d="M6.45 2.86L6.61 0.32L10.39 0.32L10.55 2.86L12.36 3.90L14.64 2.77L16.53 6.04L14.41 7.46L14.41 9.54L16.53 10.96L14.64 14.23L12.36 13.10L10.55 14.14L10.39 16.68L6.61 16.68L6.45 14.14L4.64 13.10L2.36 14.23L0.47 10.96L2.59 9.54L2.59 7.46L0.47 6.04L2.36 2.77L4.64 3.90ZM5.7 8.5a2.8 2.8 0 1 0 5.6 0a2.8 2.8 0 1 0 -5.6 0Z" fill="#0b86a4" fill-rule="evenodd" stroke="#0b86a4" stroke-width="0.8" stroke-linejoin="round"/></svg>
<div class="t ob" id="t146" style="top:878px;left:673px;transform:scaleX(0.9528);transform-origin:left center;">System</div>
<div class="t ac" id="t147" style="top:878px;left:754.6px;transform:scaleX(1.0328);transform-origin:left center;">Add</div>
<div class="t ac" id="t148" style="top:878px;left:782.0px;transform:scaleX(0.9429);transform-origin:left center;"><i>Monster.Movement.Speed</i></div>
<div class="t ac" id="t149" style="top:878px;left:928.2px;transform:scaleX(1.1343);transform-origin:left center;">to</div>
<div class="t ac" id="t150" style="top:878px;left:944.2px;transform:scaleX(0.9463);transform-origin:left center;"><b>Score</b></div>
<div style="left:745px;top:763px;width:1px;height:136px;background:#424242;"></div>
<svg style="left:652px;top:909.5px;" width="9" height="9" viewBox="0 0 9 9"><path d="M4.4 0.3V8.5M0.3 4.4H8.5" stroke="#676767" stroke-width="1.9" fill="none"/></svg>
<div class="t add" id="t151" style="top:906px;left:666px;transform:scaleX(1.0222);transform-origin:left center;">Add action</div>
<svg style="left:1047px;top:909.5px;" width="9" height="9" viewBox="0 0 9 9"><path d="M4.4 0.3V8.5M0.3 4.4H8.5" stroke="#676767" stroke-width="1.9" fill="none"/></svg>
<div class="t add" id="t152" style="top:906px;left:1061.5px;transform:scaleX(0.9509);transform-origin:left center;">Add...</div>
<div class="t cm" id="t153" style="top:937px;left:394px;letter-spacing:1.8px;">//</div>
<div class="t cm" id="t154" style="top:937px;left:412.7px;transform:scaleX(0.9748);transform-origin:left center;">Stop monsters wandering off the layout.</div>
<div style="left:325px;top:955px;width:788px;height:50px;overflow:hidden;border-radius:0 0 0 4px">
<div style="left:63px;top:4px;width:254px;height:60px;background:#424242;border-radius:3px 0 0 3px;"></div>
<div style="left:63px;top:4px;width:254px;height:31px;background:#484848;border-radius:3px 0 0 0;"></div>
<div style="left:173px;top:5px;width:1px;height:29px;background:#3f3f3f;"></div>
<div style="left:317px;top:4px;width:459px;height:60px;background:#3a3a3a;border-radius:0 3px 3px 0;"></div>
<svg style="left:92.39999999999998px;top:11px;" width="20" height="14" viewBox="0 0 20 14"><defs><filter id="mf13" x="-15%" y="-15%" width="130%" height="130%"><feGaussianBlur stdDeviation="0.55"/></filter></defs><g filter="url(#mf13)"><ellipse cx="3.6" cy="7.5" rx="3.5" ry="1.4" fill="#153a20"/><path d="M6 7L8 4.6L10.4 3L13 3.4L14.2 5.6L14.4 8.6L13.6 10.8L10.6 11.4L8 10.4L6.4 8.8Z" fill="#12361d"/><path d="M13 3.2L14.4 1L16.4 0.4L18.6 1.2L19.8 1.6L19.4 3.2L18.4 4.6L17 4.4L15.6 3.6L14.8 5.4Z" fill="#0f2a17"/><path d="M13.4 9.4L14.8 10.4L16.6 9.6L18.6 10.2L19.4 11.8L18.6 13L16.6 13.2L15.2 13.8L14 13Z" fill="#0d2414"/><path d="M13.8 3.4Q12.8 7.2 14.6 12.6" stroke="#0a160d" stroke-width="1.4" fill="none"/><ellipse cx="3.4" cy="7.5" rx="2.9" ry="0.85" fill="#2f8c4a"/><ellipse cx="1.7" cy="7.4" rx="1.3" ry="0.75" fill="#58c079"/><path d="M6.4 7.4L8.4 5.4L10.6 4L12.2 4.8L12.4 7.6L12.6 9.8L10.4 10.4L8.2 9.6Z" fill="#2a8044"/><ellipse cx="9.7" cy="6.9" rx="1.45" ry="1.7" fill="#9fd6ab"/><ellipse cx="10.8" cy="8.6" rx="1.2" ry="1" fill="#3fa85c"/><circle cx="13" cy="6.7" r="0.9" fill="#040404"/><ellipse cx="15.5" cy="1.6" rx="1.2" ry="0.9" fill="#2c7a42"/><ellipse cx="17.8" cy="2.6" rx="1.1" ry="0.9" fill="#2f8a46"/><ellipse cx="18" cy="11.5" rx="1.2" ry="1" fill="#1f6030"/></g></svg>
<div class="t ob" id="t155" style="top:12px;left:115px;transform:scaleX(1.0283);transform-origin:left center;">Monster</div>
<div class="t ac" id="t156" style="top:12px;left:183px;transform:scaleX(1.0090);transform-origin:left center;">Is outside layout</div>
<svg style="left:326.20000000000005px;top:11px;" width="20" height="14" viewBox="0 0 20 14"><defs><filter id="mf14" x="-15%" y="-15%" width="130%" height="130%"><feGaussianBlur stdDeviation="0.55"/></filter></defs><g filter="url(#mf14)"><ellipse cx="3.6" cy="7.5" rx="3.5" ry="1.4" fill="#153a20"/><path d="M6 7L8 4.6L10.4 3L13 3.4L14.2 5.6L14.4 8.6L13.6 10.8L10.6 11.4L8 10.4L6.4 8.8Z" fill="#12361d"/><path d="M13 3.2L14.4 1L16.4 0.4L18.6 1.2L19.8 1.6L19.4 3.2L18.4 4.6L17 4.4L15.6 3.6L14.8 5.4Z" fill="#0f2a17"/><path d="M13.4 9.4L14.8 10.4L16.6 9.6L18.6 10.2L19.4 11.8L18.6 13L16.6 13.2L15.2 13.8L14 13Z" fill="#0d2414"/><path d="M13.8 3.4Q12.8 7.2 14.6 12.6" stroke="#0a160d" stroke-width="1.4" fill="none"/><ellipse cx="3.4" cy="7.5" rx="2.9" ry="0.85" fill="#2f8c4a"/><ellipse cx="1.7" cy="7.4" rx="1.3" ry="0.75" fill="#58c079"/><path d="M6.4 7.4L8.4 5.4L10.6 4L12.2 4.8L12.4 7.6L12.6 9.8L10.4 10.4L8.2 9.6Z" fill="#2a8044"/><ellipse cx="9.7" cy="6.9" rx="1.45" ry="1.7" fill="#9fd6ab"/><ellipse cx="10.8" cy="8.6" rx="1.2" ry="1" fill="#3fa85c"/><circle cx="13" cy="6.7" r="0.9" fill="#040404"/><ellipse cx="15.5" cy="1.6" rx="1.2" ry="0.9" fill="#2c7a42"/><ellipse cx="17.8" cy="2.6" rx="1.1" ry="0.9" fill="#2f8a46"/><ellipse cx="18" cy="11.5" rx="1.2" ry="1" fill="#1f6030"/></g></svg>
<div class="t ob" id="t157" style="top:11px;left:347.70000000000005px;transform:scaleX(1.0283);transform-origin:left center;">Monster</div>
<div class="t ac" id="t158" style="top:11px;left:429.6px;transform:scaleX(0.9894);transform-origin:left center;">Set angle toward (</div>
<div class="t ac" id="t159" style="top:11px;left:534.5px;transform:scaleX(0.9461);transform-origin:left center;"><i>Player.X, Player.Y</i></div>
<div class="t ac" id="t160" style="top:11px;left:632.0px;">)</div>
<div style="left:420px;top:5px;width:1px;height:30px;background:#424242;"></div>
<svg style="left:327px;top:41.5px;" width="9" height="9" viewBox="0 0 9 9"><path d="M4.4 0.3V8.5M0.3 4.4H8.5" stroke="#676767" stroke-width="1.9" fill="none"/></svg>
<div class="t add" id="t161" style="top:38px;left:341px;transform:scaleX(1.0222);transform-origin:left center;">Add action</div>
<svg style="left:722px;top:41.5px;" width="9" height="9" viewBox="0 0 9 9"><path d="M4.4 0.3V8.5M0.3 4.4H8.5" stroke="#676767" stroke-width="1.9" fill="none"/></svg>
<div class="t add" id="t162" style="top:38px;left:736.5px;transform:scaleX(0.9509);transform-origin:left center;">Add...</div>
</div>
<div class="t num" id="t163" style="top:968px;left:359px;">6</div>
<!-- Project panel -->
<div style="left:1127px;top:5px;width:296px;height:556px;background:#474747;border-radius:3px;"></div>
<div style="left:1127px;top:5px;width:296px;height:26px;background:#515151;border-radius:3px 3px 0 0;"></div>
<div style="left:1127px;top:31px;width:296px;height:1px;background:#444444;"></div>
<div class="t cap" id="t164" style="top:11px;left:1140px;transform:scaleX(0.8455);transform-origin:left center;">PROJECT</div>
<svg style="left:1405px;top:13px;" width="10" height="10" viewBox="0 0 10 10"><path d="M0.5 0.5L9.5 9.5M9.5 0.5L0.5 9.5" stroke="#b4b4b4" stroke-width="1.25" fill="none"/></svg>
<div style="left:1133px;top:37px;width:284px;height:23px;background:#2e2e2e;border-radius:11.5px;"></div>
<div class="t" id="t165" style="top:41px;left:1145px;transform:scaleX(0.9417);transform-origin:left center;color:#8c8c8c;">Search</div>
<div style="left:1413px;top:66px;width:8px;height:493px;background:#3d3d3d;border-radius:4px;"></div>
<div style="left:1413px;top:66px;width:8px;height:357px;background:#5e5e5e;border-radius:4px;"></div>
<svg style="left:1136.4px;top:76.9px;" width="8.8" height="6.2" viewBox="0 0 8.8 6.2"><path d="M0 0H8.8L4.4 6.2Z" fill="#222222"/></svg>
<svg style="left:1157px;top:74.7px;" width="17" height="13" viewBox="0 0 17 13"><path d="M1.7 0.75H6L7.5 2.5H14.9Q15.85 2.5 15.85 3.45V11.3Q15.85 12.25 14.9 12.25H1.7Q0.75 12.25 0.75 11.3V1.7Q0.75 0.75 1.7 0.75Z" fill="none" stroke="#c6c6c6" stroke-width="1.4" stroke-linejoin="round"/></svg>
<div class="t tr" id="t166" style="top:73px;left:1179.8px;transform:scaleX(0.9937);transform-origin:left center;">Ghost Shooter</div>
<svg style="left:1156.4px;top:102.1px;" width="8.8" height="6.2" viewBox="0 0 8.8 6.2"><path d="M0 0H8.8L4.4 6.2Z" fill="#222222"/></svg>
<svg style="left:1177px;top:99.4px;" width="17" height="13" viewBox="0 0 17 13"><path d="M1.7 0.75H6L7.5 2.5H14.9Q15.85 2.5 15.85 3.45V11.3Q15.85 12.25 14.9 12.25H1.7Q0.75 12.25 0.75 11.3V1.7Q0.75 0.75 1.7 0.75Z" fill="none" stroke="#c6c6c6" stroke-width="1.4" stroke-linejoin="round"/></svg>
<div class="t tr" id="t167" style="top:99px;left:1199.8px;transform:scaleX(0.9726);transform-origin:left center;">Layouts</div>
<svg style="left:1195.2px;top:124.3px;" width="19" height="15" viewBox="0 0 19 15"><rect x="0.9" y="0.9" width="17.2" height="13.2" rx="1.8" fill="none" stroke="#33c65e" stroke-width="1.8"/><rect x="4" y="4" width="6" height="4.4" fill="#33c65e"/></svg>
<div class="t gr" id="t168" style="top:124px;left:1219.8px;transform:scaleX(0.9684);transform-origin:left center;">Layout 1</div>
<svg style="left:1156.4px;top:161.1px;" width="8.8" height="6.2" viewBox="0 0 8.8 6.2"><path d="M0 0H8.8L4.4 6.2Z" fill="#222222"/></svg>
<svg style="left:1177px;top:158.4px;" width="17" height="13" viewBox="0 0 17 13"><path d="M1.7 0.75H6L7.5 2.5H14.9Q15.85 2.5 15.85 3.45V11.3Q15.85 12.25 14.9 12.25H1.7Q0.75 12.25 0.75 11.3V1.7Q0.75 0.75 1.7 0.75Z" fill="none" stroke="#c6c6c6" stroke-width="1.4" stroke-linejoin="round"/></svg>
<div class="t tr" id="t169" style="top:158px;left:1199.8px;transform:scaleX(0.9553);transform-origin:left center;">Event sheets</div>
<svg style="left:1195.2px;top:183.3px;" width="19" height="15" viewBox="0 0 19 15"><rect x="0.9" y="0.9" width="17.2" height="13.2" rx="1.8" fill="none" stroke="#33c65e" stroke-width="1.8"/><rect x="3.6" y="3.6" width="3.2" height="1.8" fill="#33c65e"/><rect x="8.4" y="3.6" width="7" height="1.8" fill="#33c65e"/><rect x="3.6" y="6.6" width="3.2" height="1.8" fill="#33c65e"/><rect x="8.4" y="6.6" width="7" height="1.8" fill="#33c65e"/><rect x="3.6" y="9.6" width="3.2" height="1.8" fill="#33c65e"/><rect x="8.4" y="9.6" width="7" height="1.8" fill="#33c65e"/></svg>
<div class="t gr" id="t170" style="top:183px;left:1219.8px;transform:scaleX(0.9535);transform-origin:left center;">Event sheet 1</div>
<svg style="left:1177px;top:217.4px;" width="17" height="13" viewBox="0 0 17 13"><path d="M1.7 0.75H6L7.5 2.5H14.9Q15.85 2.5 15.85 3.45V11.3Q15.85 12.25 14.9 12.25H1.7Q0.75 12.25 0.75 11.3V1.7Q0.75 0.75 1.7 0.75Z" fill="none" stroke="#c6c6c6" stroke-width="1.4" stroke-linejoin="round"/></svg>
<div class="t tr" id="t171" style="top:217px;left:1199.8px;transform:scaleX(0.9765);transform-origin:left center;">Scripts</div>
<svg style="left:1156.4px;top:246.29999999999998px;" width="8.8" height="6.2" viewBox="0 0 8.8 6.2"><path d="M0 0H8.8L4.4 6.2Z" fill="#222222"/></svg>
<svg style="left:1177px;top:243.6px;" width="17" height="13" viewBox="0 0 17 13"><path d="M1.7 0.75H6L7.5 2.5H14.9Q15.85 2.5 15.85 3.45V11.3Q15.85 12.25 14.9 12.25H1.7Q0.75 12.25 0.75 11.3V1.7Q0.75 0.75 1.7 0.75Z" fill="none" stroke="#c6c6c6" stroke-width="1.4" stroke-linejoin="round"/></svg>
<div class="t tr" id="t172" style="top:242px;left:1199.8px;transform:scaleX(1.0005);transform-origin:left center;">Object types</div>
<svg style="left:1196px;top:271px" width="18" height="7.4" viewBox="0 0 18 8" preserveAspectRatio="none"><path d="M1.8 0.2H12.2L17.8 4L12.2 7.8H1.8Q0.2 7.8 0.2 6.2V1.8Q0.2 0.2 1.8 0.2Z" fill="#050505"/><ellipse cx="4.2" cy="4" rx="2.6" ry="2.2" fill="#ffffff"/><rect x="4.2" y="2" width="6.4" height="4" fill="#e8e8e8"/><rect x="6.2" y="3" width="3.6" height="2" fill="#303030"/><path d="M10.4 1.6L15.2 4L10.4 6.4Z" fill="#d8281a"/><ellipse cx="12.8" cy="4" rx="1.6" ry="1.2" fill="#ffb800"/></svg>
<div class="t ob" id="t173" style="top:268px;left:1219.8px;transform:scaleX(0.9929);transform-origin:left center;">Bullet</div>
<svg style="left:1195px;top:291px;" width="20" height="17" viewBox="0 0 20 17"><defs><radialGradient id="eg15a" cx="50%" cy="50%" r="50%"><stop offset="0" stop-color="#ff8a1c"/><stop offset="0.72" stop-color="#f24e08"/><stop offset="1" stop-color="#c03000" stop-opacity="0"/></radialGradient><radialGradient id="eg15b" cx="50%" cy="50%" r="50%"><stop offset="0" stop-color="#ffffff"/><stop offset="0.6" stop-color="#fff2b0"/><stop offset="0.85" stop-color="#ffc850"/><stop offset="1" stop-color="#ffa020" stop-opacity="0"/></radialGradient><filter id="eg15f"><feGaussianBlur stdDeviation="0.35"/></filter></defs><rect width="20" height="17" fill="#020202"/><g filter="url(#eg15f)"><ellipse cx="14.2" cy="6.6" rx="4.2" ry="5.6" fill="url(#eg15a)"/><ellipse cx="11.6" cy="12.4" rx="5.4" ry="4.2" fill="url(#eg15a)"/><ellipse cx="7" cy="9.8" rx="5.6" ry="5.4" fill="url(#eg15b)"/><ellipse cx="9.6" cy="5.8" rx="4.6" ry="4.2" fill="url(#eg15b)"/><ellipse cx="11.4" cy="10" rx="2.3" ry="3" fill="#e8a040" opacity="0.9"/><ellipse cx="15" cy="7.4" rx="1.3" ry="2.2" fill="#f4e048" opacity="0.85"/></g></svg>
<div class="t ob" id="t174" style="top:293px;left:1219.8px;transform:scaleX(0.9721);transform-origin:left center;">Explosion</div>
<svg style="left:1197px;top:318px;" width="16" height="16" viewBox="0 0 16 16"><rect x="0.15000000000000013" y="0.2" width="1.9" height="1.8" rx="0.8" fill="#0b86a4"/><rect x="0.15000000000000013" y="14" width="1.9" height="1.8" rx="0.8" fill="#0b86a4"/><rect x="3.45" y="0.2" width="1.9" height="1.8" rx="0.8" fill="#0b86a4"/><rect x="3.45" y="14" width="1.9" height="1.8" rx="0.8" fill="#0b86a4"/><rect x="6.6" y="0.2" width="2.8" height="1.8" rx="0.8" fill="#0b86a4"/><rect x="6.6" y="14" width="2.8" height="1.8" rx="0.8" fill="#0b86a4"/><rect x="10.65" y="0.2" width="1.9" height="1.8" rx="0.8" fill="#0b86a4"/><rect x="10.65" y="14" width="1.9" height="1.8" rx="0.8" fill="#0b86a4"/><rect x="13.950000000000001" y="0.2" width="1.9" height="1.8" rx="0.8" fill="#0b86a4"/><rect x="13.950000000000001" y="14" width="1.9" height="1.8" rx="0.8" fill="#0b86a4"/><rect x="0.2" y="3.45" width="1.8" height="1.9" rx="0.8" fill="#0b86a4"/><rect x="14" y="3.45" width="1.8" height="1.9" rx="0.8" fill="#0b86a4"/><rect x="0.2" y="7.05" width="1.8" height="1.9" rx="0.8" fill="#0b86a4"/><rect x="14" y="7.05" width="1.8" height="1.9" rx="0.8" fill="#0b86a4"/><rect x="0.2" y="10.65" width="1.8" height="1.9" rx="0.8" fill="#0b86a4"/><rect x="14" y="10.65" width="1.8" height="1.9" rx="0.8" fill="#0b86a4"/><path d="M4.2 3.8H11.8V6.1H9.2V12.2H6.8V6.1H4.2Z" fill="#0b86a4"/></svg>
<div class="t ob" id="t175" style="top:318px;left:1219.8px;transform:scaleX(0.9586);transform-origin:left center;">GameOverText</div>
<svg style="left:1195px;top:344px;" width="20" height="14" viewBox="0 0 20 14"><rect x="0" y="0" width="20" height="14" rx="1.6" fill="#0a7f9c"/><rect x="2.5" y="2.8" width="1.4" height="1.4" fill="#075d74"/><rect x="5.8999999999999995" y="2.8" width="1.4" height="1.4" fill="#075d74"/><rect x="9.3" y="2.8" width="1.4" height="1.4" fill="#075d74"/><rect x="12.700000000000001" y="2.8" width="1.4" height="1.4" fill="#075d74"/><rect x="16.1" y="2.8" width="1.4" height="1.4" fill="#075d74"/><rect x="2.5" y="6.2" width="3.2" height="1.4" fill="#075d74"/><rect x="7.6" y="6.2" width="1.4" height="1.4" fill="#075d74"/><rect x="11" y="6.2" width="1.4" height="1.4" fill="#075d74"/><rect x="14.3" y="6.2" width="3.2" height="1.4" fill="#075d74"/><rect x="2.5" y="9.6" width="1.4" height="1.4" fill="#075d74"/><rect x="6" y="9.8" width="8" height="1.1" fill="#075d74"/><rect x="16.1" y="9.6" width="1.4" height="1.4" fill="#075d74"/></svg>
<div class="t ob" id="t176" style="top:344px;left:1219.8px;transform:scaleX(0.9846);transform-origin:left center;">Keyboard</div>
<svg style="left:1195px;top:369px;" width="20" height="14" viewBox="0 0 20 14"><defs><filter id="mf16" x="-15%" y="-15%" width="130%" height="130%"><feGaussianBlur stdDeviation="0.55"/></filter></defs><g filter="url(#mf16)"><ellipse cx="3.6" cy="7.5" rx="3.5" ry="1.4" fill="#153a20"/><path d="M6 7L8 4.6L10.4 3L13 3.4L14.2 5.6L14.4 8.6L13.6 10.8L10.6 11.4L8 10.4L6.4 8.8Z" fill="#12361d"/><path d="M13 3.2L14.4 1L16.4 0.4L18.6 1.2L19.8 1.6L19.4 3.2L18.4 4.6L17 4.4L15.6 3.6L14.8 5.4Z" fill="#0f2a17"/><path d="M13.4 9.4L14.8 10.4L16.6 9.6L18.6 10.2L19.4 11.8L18.6 13L16.6 13.2L15.2 13.8L14 13Z" fill="#0d2414"/><path d="M13.8 3.4Q12.8 7.2 14.6 12.6" stroke="#0a160d" stroke-width="1.4" fill="none"/><ellipse cx="3.4" cy="7.5" rx="2.9" ry="0.85" fill="#2f8c4a"/><ellipse cx="1.7" cy="7.4" rx="1.3" ry="0.75" fill="#58c079"/><path d="M6.4 7.4L8.4 5.4L10.6 4L12.2 4.8L12.4 7.6L12.6 9.8L10.4 10.4L8.2 9.6Z" fill="#2a8044"/><ellipse cx="9.7" cy="6.9" rx="1.45" ry="1.7" fill="#9fd6ab"/><ellipse cx="10.8" cy="8.6" rx="1.2" ry="1" fill="#3fa85c"/><circle cx="13" cy="6.7" r="0.9" fill="#040404"/><ellipse cx="15.5" cy="1.6" rx="1.2" ry="0.9" fill="#2c7a42"/><ellipse cx="17.8" cy="2.6" rx="1.1" ry="0.9" fill="#2f8a46"/><ellipse cx="18" cy="11.5" rx="1.2" ry="1" fill="#1f6030"/></g></svg>
<div class="t ob" id="t177" style="top:369px;left:1219.8px;transform:scaleX(1.0283);transform-origin:left center;">Monster</div>
<svg style="left:1198px;top:392.5px;" width="14" height="19" viewBox="0 0 14 19"><path d="M1 3.2Q1 1 3.2 1H10.8Q13 1 13 3.2V11.6Q13 18 7 18Q1 18 1 11.6Z" fill="none" stroke="#0b86a4" stroke-width="1.8"/><ellipse cx="7" cy="6.3" rx="1.9" ry="2.7" fill="#0b86a4"/></svg>
<div class="t ob" id="t178" style="top:395px;left:1219.8px;transform:scaleX(0.9941);transform-origin:left center;">Mouse</div>
<svg style="left:1195px;top:418px;" width="20" height="20" viewBox="0 0 20 20"><defs><filter id="pf17" x="-10%" y="-10%" width="120%" height="120%"><feGaussianBlur stdDeviation="0.5"/></filter></defs><g filter="url(#pf17)"><ellipse cx="8" cy="4" rx="3.4" ry="3.6" fill="#0a0a0a"/><ellipse cx="9" cy="15.6" rx="3.6" ry="3.8" fill="#0a0a0a"/><ellipse cx="5" cy="9.6" rx="5" ry="5.4" fill="#181818"/><ellipse cx="9.6" cy="9.8" rx="4" ry="5" fill="#101010"/><ellipse cx="7.4" cy="4.6" rx="1.4" ry="0.9" fill="#585858"/><ellipse cx="8.2" cy="14.4" rx="1.5" ry="0.8" fill="#6c6c6c"/><ellipse cx="4.2" cy="6.6" rx="0.9" ry="0.6" fill="#5a5a5a"/><rect x="5.4" y="6.6" width="3.2" height="6" rx="1.3" fill="#7c3604"/><rect x="5.8" y="8.8" width="2.2" height="3.2" rx="1" fill="#96520a"/><rect x="8.4" y="7" width="1.8" height="5.4" rx="0.8" fill="#4a1204"/><ellipse cx="11.8" cy="7.2" rx="1.9" ry="1.6" fill="#d49c7c"/><ellipse cx="13" cy="11.8" rx="1.4" ry="1.3" fill="#d09c70"/><path d="M11 8.8L14.4 8.4L19.2 9.8L14.4 11L11.4 10.4Z" fill="#1a1412"/><circle cx="16.6" cy="9.7" r="1.05" fill="#a0a0a0"/></g></svg>
<div class="t ob" id="t179" style="top:420px;left:1219.8px;transform:scaleX(0.9441);transform-origin:left center;">Player</div>
<svg style="left:1197px;top:445px;" width="16" height="16" viewBox="0 0 16 16"><rect x="0.15000000000000013" y="0.2" width="1.9" height="1.8" rx="0.8" fill="#0b86a4"/><rect x="0.15000000000000013" y="14" width="1.9" height="1.8" rx="0.8" fill="#0b86a4"/><rect x="3.45" y="0.2" width="1.9" height="1.8" rx="0.8" fill="#0b86a4"/><rect x="3.45" y="14" width="1.9" height="1.8" rx="0.8" fill="#0b86a4"/><rect x="6.6" y="0.2" width="2.8" height="1.8" rx="0.8" fill="#0b86a4"/><rect x="6.6" y="14" width="2.8" height="1.8" rx="0.8" fill="#0b86a4"/><rect x="10.65" y="0.2" width="1.9" height="1.8" rx="0.8" fill="#0b86a4"/><rect x="10.65" y="14" width="1.9" height="1.8" rx="0.8" fill="#0b86a4"/><rect x="13.950000000000001" y="0.2" width="1.9" height="1.8" rx="0.8" fill="#0b86a4"/><rect x="13.950000000000001" y="14" width="1.9" height="1.8" rx="0.8" fill="#0b86a4"/><rect x="0.2" y="3.45" width="1.8" height="1.9" rx="0.8" fill="#0b86a4"/><rect x="14" y="3.45" width="1.8" height="1.9" rx="0.8" fill="#0b86a4"/><rect x="0.2" y="7.05" width="1.8" height="1.9" rx="0.8" fill="#0b86a4"/><rect x="14" y="7.05" width="1.8" height="1.9" rx="0.8" fill="#0b86a4"/><rect x="0.2" y="10.65" width="1.8" height="1.9" rx="0.8" fill="#0b86a4"/><rect x="14" y="10.65" width="1.8" height="1.9" rx="0.8" fill="#0b86a4"/><path d="M4.2 3.8H11.8V6.1H9.2V12.2H6.8V6.1H4.2Z" fill="#0b86a4"/></svg>
<div class="t ob" id="t180" style="top:446px;left:1219.8px;transform:scaleX(0.9441);transform-origin:left center;">Status</div>
<svg style="left:1195px;top:469px;" width="20" height="20" viewBox="0 0 20 20"><rect width="20" height="20" fill="#4a3135"/><rect x="10" y="4" width="1" height="1" fill="#432b2f"/><rect x="1" y="2" width="1" height="1" fill="#553840"/><rect x="3" y="11" width="1" height="1" fill="#553840"/><rect x="1" y="16" width="1" height="1" fill="#3c2529"/><rect x="1" y="2" width="1" height="1" fill="#432b2f"/><rect x="13" y="2" width="1" height="1" fill="#3c2529"/><rect x="2" y="17" width="1" height="1" fill="#432b2f"/><rect x="1" y="18" width="1" height="1" fill="#5a3c42"/><rect x="7" y="18" width="1" height="1" fill="#5a3c42"/><rect x="18" y="18" width="1" height="1" fill="#432b2f"/><rect x="1" y="7" width="1" height="1" fill="#5a3c42"/><rect x="17" y="4" width="1" height="1" fill="#60424a"/><rect x="13" y="4" width="1" height="1" fill="#553840"/><rect x="3" y="18" width="1" height="1" fill="#60424a"/><rect x="17" y="5" width="1" height="1" fill="#5a3c42"/><rect x="18" y="18" width="1" height="1" fill="#3c2529"/><rect x="11" y="3" width="1" height="1" fill="#553840"/><rect x="2" y="18" width="1" height="1" fill="#5a3c42"/><rect x="19" y="6" width="1" height="1" fill="#432b2f"/><rect x="17" y="13" width="1" height="1" fill="#60424a"/><rect x="14" y="18" width="1" height="1" fill="#432b2f"/><rect x="11" y="9" width="1" height="1" fill="#3c2529"/><rect x="5" y="7" width="1" height="1" fill="#5a3c42"/><rect x="18" y="9" width="1" height="1" fill="#553840"/><rect x="15" y="10" width="1" height="1" fill="#432b2f"/><rect x="9" y="19" width="1" height="1" fill="#5a3c42"/><rect x="3" y="16" width="1" height="1" fill="#432b2f"/><rect x="5" y="10" width="1" height="1" fill="#3c2529"/><rect x="15" y="13" width="1" height="1" fill="#5a3c42"/><rect x="2" y="17" width="1" height="1" fill="#553840"/><rect x="10" y="10" width="1" height="1" fill="#60424a"/><rect x="19" y="15" width="1" height="1" fill="#553840"/><rect x="14" y="2" width="1" height="1" fill="#5a3c42"/><rect x="8" y="15" width="1" height="1" fill="#5a3c42"/><rect x="1" y="9" width="1" height="1" fill="#553840"/><rect x="14" y="9" width="1" height="1" fill="#432b2f"/><rect x="11" y="0" width="1" height="1" fill="#432b2f"/><rect x="11" y="5" width="1" height="1" fill="#553840"/><rect x="3" y="15" width="1" height="1" fill="#5a3c42"/><rect x="6" y="9" width="1" height="1" fill="#3c2529"/><rect x="7" y="12" width="1" height="1" fill="#432b2f"/><rect x="15" y="2" width="1" height="1" fill="#3c2529"/><rect x="14" y="12" width="1" height="1" fill="#553840"/><rect x="8" y="4" width="1" height="1" fill="#432b2f"/><rect x="17" y="8" width="1" height="1" fill="#432b2f"/><rect x="11" y="12" width="1" height="1" fill="#3c2529"/><rect x="4" y="2" width="1" height="1" fill="#3c2529"/><rect x="4" y="7" width="1" height="1" fill="#3c2529"/><rect x="0" y="15" width="1" height="1" fill="#553840"/><rect x="5" y="8" width="1" height="1" fill="#60424a"/><rect x="0" y="4" width="1" height="1" fill="#432b2f"/><rect x="17" y="11" width="1" height="1" fill="#553840"/><rect x="18" y="10" width="1" height="1" fill="#3c2529"/><rect x="16" y="19" width="1" height="1" fill="#5a3c42"/><rect x="14" y="17" width="1" height="1" fill="#432b2f"/><rect x="12" y="12" width="1" height="1" fill="#432b2f"/><rect x="3" y="15" width="1" height="1" fill="#432b2f"/><rect x="1" y="6" width="1" height="1" fill="#5a3c42"/><rect x="6" y="14" width="1" height="1" fill="#3c2529"/><rect x="3" y="10" width="1" height="1" fill="#553840"/><rect x="1" y="3" width="1" height="1" fill="#5a3c42"/><rect x="18" y="4" width="1" height="1" fill="#553840"/><rect x="3" y="11" width="1" height="1" fill="#553840"/><rect x="0" y="2" width="1" height="1" fill="#3c2529"/><rect x="19" y="12" width="1" height="1" fill="#3c2529"/><rect x="8" y="11" width="1" height="1" fill="#553840"/><rect x="11" y="15" width="1" height="1" fill="#5a3c42"/><rect x="3" y="15" width="1" height="1" fill="#432b2f"/><rect x="15" y="15" width="1" height="1" fill="#60424a"/><rect x="2" y="4" width="1" height="1" fill="#5a3c42"/></svg>
<div class="t ob" id="t181" style="top:471px;left:1219.8px;transform:scaleX(0.9920);transform-origin:left center;">TiledBackground</div>
<svg style="left:1177px;top:505.79999999999995px;" width="17" height="13" viewBox="0 0 17 13"><path d="M1.7 0.75H6L7.5 2.5H14.9Q15.85 2.5 15.85 3.45V11.3Q15.85 12.25 14.9 12.25H1.7Q0.75 12.25 0.75 11.3V1.7Q0.75 0.75 1.7 0.75Z" fill="none" stroke="#c6c6c6" stroke-width="1.4" stroke-linejoin="round"/></svg>
<div class="t ob" id="t182" style="top:505px;left:1199.8px;transform:scaleX(0.9358);transform-origin:left center;">Families</div>
<svg style="left:1156.4px;top:534.5px;" width="8.8" height="6.2" viewBox="0 0 8.8 6.2"><path d="M0 0H8.8L4.4 6.2Z" fill="#222222"/></svg>
<svg style="left:1177px;top:531.8px;" width="17" height="13" viewBox="0 0 17 13"><path d="M1.7 0.75H6L7.5 2.5H14.9Q15.85 2.5 15.85 3.45V11.3Q15.85 12.25 14.9 12.25H1.7Q0.75 12.25 0.75 11.3V1.7Q0.75 0.75 1.7 0.75Z" fill="none" stroke="#c6c6c6" stroke-width="1.4" stroke-linejoin="round"/></svg>
<div class="t tr" id="t183" style="top:530px;left:1199.8px;transform:scaleX(0.9754);transform-origin:left center;">Timelines</div>
<div style="left:1191px;top:556px;width:60px;height:5px;overflow:hidden">
<svg style="left:6px;top:1px;" width="17" height="13" viewBox="0 0 17 13"><path d="M1.7 0.75H6.2L7.7 2.5H15.3Q16.25 2.5 16.25 3.45V11.3Q16.25 12.25 15.3 12.25H1.7Q0.75 12.25 0.75 11.3V1.7Q0.75 0.75 1.7 0.75Z" fill="none" stroke="#d0d0d0" stroke-width="1.5"/></svg>
</div>
<!-- Layers panel -->
<div style="left:1127px;top:565px;width:296px;height:412px;background:#474747;border-radius:3px;"></div>
<div style="left:1127px;top:565px;width:296px;height:26px;background:#515151;border-radius:3px 3px 0 0;"></div>
<div style="left:1127px;top:591px;width:296px;height:1px;background:#444444;"></div>
<div class="t cap" id="t184" style="top:571px;left:1140px;transform:scaleX(0.9009);transform-origin:left center;">LAYERS - LAYOUT 1</div>
<svg style="left:1405px;top:573px;" width="10" height="10" viewBox="0 0 10 10"><path d="M0.5 0.5L9.5 9.5M9.5 0.5L0.5 9.5" stroke="#b4b4b4" stroke-width="1.25" fill="none"/></svg>
<div class="t tr" id="t185" style="top:600px;left:1142px;">1</div>
<div class="t tr" id="t186" style="top:600px;left:1168px;transform:scaleX(0.9846);transform-origin:left center;">UI</div>
<svg style="left:1375px;top:599px;" width="14" height="17.5" viewBox="0 0 14 17.5"><path d="M10.35 7.4V4.4A3.35 3.35 0 0 0 3.65 4.1" fill="none" stroke="#c4c4c4" stroke-width="1.5" stroke-linecap="round"/><rect x="1.25" y="7.3" width="11.7" height="8.75" rx="1.1" fill="none" stroke="#c4c4c4" stroke-width="1.5"/><circle cx="6.9" cy="11.6" r="1.25" fill="#c4c4c4"/></svg>
<svg style="left:1396px;top:600px;" width="15" height="15" viewBox="0 0 15 15"><rect width="15" height="15" rx="3" fill="#2e2e2e"/><path d="M1.2 7.5L5 11.3L13 3.2" fill="none" stroke="#e8e8e8" stroke-width="1.25"/></svg>
<div style="left:1131px;top:622px;width:288px;height:26px;background:#f8f8f8;border-radius:2px;"></div>
<div class="t" id="t187" style="top:627px;left:1142px;color:#333;">0</div>
<div class="t" id="t188" style="top:627px;left:1168px;transform:scaleX(1.0217);transform-origin:left center;color:#333;">Main</div>
<svg style="left:1375px;top:625.6px;" width="14" height="17.5" viewBox="0 0 14 17.5"><path d="M10.35 7.4V4.4A3.35 3.35 0 0 0 3.65 4.1" fill="none" stroke="#555555" stroke-width="1.5" stroke-linecap="round"/><rect x="1.25" y="7.3" width="11.7" height="8.75" rx="1.1" fill="none" stroke="#555555" stroke-width="1.5"/><circle cx="6.9" cy="11.6" r="1.25" fill="#555555"/></svg>
<svg style="left:1396px;top:628px;" width="15" height="15" viewBox="0 0 15 15"><rect width="15" height="15" rx="3" fill="#5e5e5e"/><path d="M1.2 7.5L5 11.3L13 3.2" fill="none" stroke="#f0f0f0" stroke-width="1.25"/></svg>
<div style="left:1127px;top:979px;width:147px;height:26px;background:#ffffff;border-radius:0 0 5px 5px;"></div>
<div class="t" id="t189" style="top:983px;left:1142px;transform:scaleX(0.9636);transform-origin:left center;color:#1c1c1c;">Layers - Layout 1</div>
<svg style="left:1257px;top:988px;" width="9" height="9" viewBox="0 0 9 9"><path d="M0.5 0.5L8.5 8.5M8.5 0.5L0.5 8.5" stroke="#333333" stroke-width="1.2" fill="none"/></svg>
<div style="left:1276px;top:979px;width:147px;height:26px;background:#555555;border-radius:0 0 5px 5px;"></div>
<div class="t" style="top:983px;left:1149.5px;width:400px;text-align:center;transform:scaleX(1.0008);transform-origin:center center;color:#e0e0e0;"><span id="t190">Tilemap</span></div>
</body></html>
